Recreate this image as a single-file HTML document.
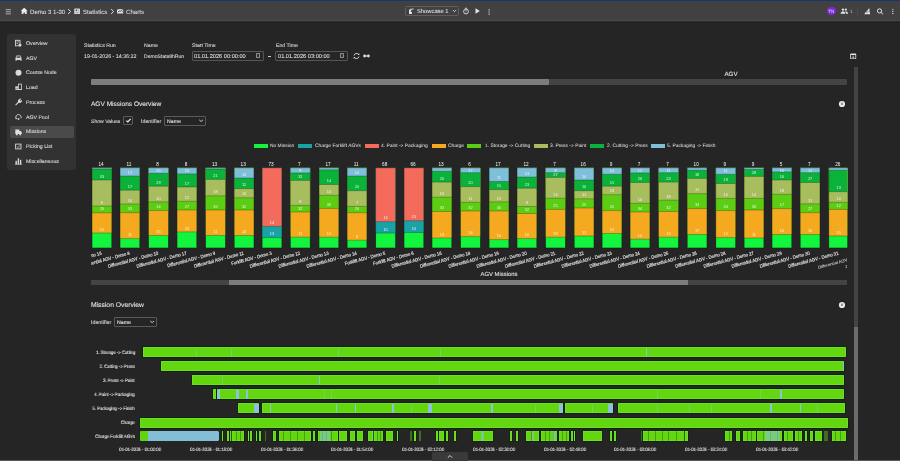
<!DOCTYPE html>
<html><head><meta charset='utf-8'><style>
html,body{margin:0;padding:0;width:900px;height:461px;overflow:hidden;background:#252525;}
body{position:relative;font-family:'Liberation Sans',sans-serif;}
.r{position:absolute;}
.t{position:absolute;white-space:nowrap;line-height:1.2;will-change:transform;text-rendering:geometricPrecision;font-family:'Liberation Sans',sans-serif;}
</style></head><body>
<div class='r' style='left:0px;top:0px;width:900.00px;height:1.00px;background:#213654;'></div><div class='r' style='left:0px;top:1px;width:900.00px;height:1.00px;background:#31425a;'></div><div class='r' style='left:0px;top:2px;width:900.00px;height:18.00px;background:#414141;'></div><div class='r' style='left:0px;top:20px;width:900.00px;height:1.00px;background:#474747;'></div><div class='r' style='left:0px;top:21px;width:900.00px;height:1.00px;background:#2d2d2d;'></div><div class='r' style='left:0px;top:22px;width:900.00px;height:1.00px;background:#1f1f1f;'></div><svg class='r' style='left:5px;top:9px' width='7' height='6' viewBox='-0.500 -0.000 7 6'><rect x='0.2' y='0.3' width='5.2' height='0.8' fill='#c8c8c8'/><rect x='0.2' y='2.4' width='5.2' height='0.8' fill='#c8c8c8'/><rect x='0.2' y='4.5' width='5.2' height='0.8' fill='#c8c8c8'/></svg><svg class='r' style='left:20px;top:7px' width='8' height='8' viewBox='-0.800 -0.800 8 8'><path d='M3.4 0 L6.8 3 L5.9 3 L5.9 6.3 L4.1 6.3 L4.1 4.6 L2.7 4.6 L2.7 6.3 L0.9 6.3 L0.9 3 L0 3 Z' fill='#ececec'/></svg><div class='t' style='left:30px;top:8.59px;font-size:6.10px;color:#d6d6d6;transform-origin:0 50%;-webkit-text-stroke:0.1px #d6d6d6;text-rendering:geometricPrecision;'>Demo 3 1-30</div><svg class='r' style='left:67px;top:8px' width='5' height='7' viewBox='-0.500 -0.500 5 7'><path d='M0.7 0.5 L3 3 L0.7 5.5' stroke='#e0e0e0' stroke-width='1' fill='none'/></svg><svg class='r' style='left:74px;top:8px' width='7' height='6' viewBox='-0.200 -0.400 7 6'><rect x='0' y='0' width='5.8' height='5.6' rx='0.6' fill='#d4d4d4'/><circle cx='2.2' cy='1.9' r='0.7' fill='#3a3a3a'/><rect x='1.6' y='3.6' width='3' height='0.6' fill='#8a8a8a'/><rect x='3.4' y='1.5' width='1.4' height='0.6' fill='#8a8a8a'/></svg><div class='t' style='left:83px;top:8.59px;font-size:6.10px;color:#d6d6d6;transform-origin:0 50%;-webkit-text-stroke:0.1px #d6d6d6;text-rendering:geometricPrecision;'>Statistics</div><svg class='r' style='left:110px;top:8px' width='5' height='7' viewBox='-0.500 -0.500 5 7'><path d='M0.7 0.5 L3 3 L0.7 5.5' stroke='#e0e0e0' stroke-width='1' fill='none'/></svg><svg class='r' style='left:117px;top:8px' width='7' height='6' viewBox='-0.000 -0.600 7 6'><path d='M0 1.2 Q3.1 -0.6 6.2 1.2 L6.2 5 L0 5 Z' fill='#dedede'/><path d='M0.8 3.6 L2.2 2.2 L3.2 3 L4.3 1.6 L5.4 3.2' stroke='#404040' stroke-width='0.8' fill='none'/></svg><div class='t' style='left:126px;top:8.59px;font-size:6.10px;color:#d6d6d6;transform-origin:0 50%;-webkit-text-stroke:0.1px #d6d6d6;text-rendering:geometricPrecision;'>Charts</div><div class='r' style='left:405.4px;top:6.4px;width:53.2px;height:9.5px;border:0.7px solid #5e5e5e;border-radius:1.5px;box-sizing:border-box'></div><svg class='r' style='left:408px;top:8px' width='6' height='6' viewBox='-0.000 -0.000 6 6'><path d='M1 6 L1 2 L3 0.5 L4 1.5 L2.5 3 L4 4.5 L4 6 Z' fill='#e0e0e0'/><circle cx='4.8' cy='1' r='0.7' fill='#e0e0e0'/></svg><div class='t' style='left:417px;top:8.87px;font-size:5.80px;color:#dcdcdc;transform-origin:0 50%;-webkit-text-stroke:0.1px #dcdcdc;'>Showcase 1</div><svg class='r' style='left:452px;top:9px' width='5' height='4' viewBox='-0.500 -0.500 5 4'><path d='M0.4 0.5 L2 2.2 L3.6 0.5' stroke='#d8d8d8' stroke-width='0.9' fill='none'/></svg><svg class='r' style='left:462px;top:7px' width='8' height='8' viewBox='-0.500 -0.500 8 8'><circle cx='3.5' cy='4' r='2.4' fill='none' stroke='#dadada' stroke-width='0.95'/><rect x='2.4' y='0.3' width='2.2' height='0.9' fill='#dadada'/><path d='M3.5 4.2 L3.5 2.6' stroke='#dadada' stroke-width='0.8'/></svg><svg class='r' style='left:475px;top:8px' width='5' height='6' viewBox='-0.000 -0.000 5 6'><path d='M0.5 0.3 L4.8 3 L0.5 5.7 Z' fill='#e4e4e4'/></svg><svg class='r' style='left:487px;top:9px' width='4' height='6' viewBox='-0.600 -0.300 4 6'><circle cx='1.5' cy='0.75' r='0.7' fill='#dadada'/><circle cx='1.5' cy='2.8' r='0.7' fill='#dadada'/><circle cx='1.5' cy='4.85' r='0.7' fill='#dadada'/></svg><div class='r' style='left:827.4px;top:6.8px;width:8.6px;height:8.6px;border-radius:50%;background:#7b2ad2'></div><div class='t' style='left:827.4px;top:8.5px;width:8.6px;text-align:center;font-size:4.6px;color:#e8dcff;-webkit-text-stroke:0'>TN</div><svg class='r' style='left:840px;top:8px' width='9' height='6' viewBox='-0.300 -0.300 9 6'><circle cx='2.7' cy='1.3' r='1.2' fill='#e2e2e2'/><circle cx='5.6' cy='1.3' r='1.1' fill='#e2e2e2'/><path d='M0.2 5.4 Q0.3 2.9 2.7 2.9 Q5.1 2.9 5.2 5.4 Z' fill='#e2e2e2'/><path d='M4.6 2.9 Q7.7 2.7 7.8 5.4 L5.8 5.4 Q5.7 3.8 4.6 2.9Z' fill='#e2e2e2'/></svg><div class='t' style='left:850.2px;top:9.87px;font-size:4.80px;color:#bdbdbd;transform-origin:0 50%;'>1</div><div class='r' style='left:856.8px;top:8px;width:0.70px;height:6.50px;background:#4b4b4b;'></div><svg class='r' style='left:864px;top:8px' width='7' height='7' viewBox='-0.000 -0.200 7 7'><path d='M0.2 6.1 L6.3 6.1 L6 5 Q5.2 3.6 5.4 1.6 L5.9 0.6 L4.9 0.2 Q3.4 2.6 1.4 4.4 Z' fill='#e4e4e4'/><path d='M2.3 4.6 Q3.8 4 4.8 3.2' stroke='#414141' stroke-width='0.55' fill='none'/></svg><svg class='r' style='left:876px;top:8px' width='8' height='7' viewBox='-0.500 -0.000 8 7'><circle cx='3' cy='2.9' r='2.1' fill='none' stroke='#e0e0e0' stroke-width='1'/><path d='M4.5 4.4 L6.6 6.4' stroke='#e0e0e0' stroke-width='1'/></svg><svg class='r' style='left:891px;top:8px' width='4' height='7' viewBox='-0.300 -0.600 4 7'><circle cx='1.5' cy='0.7' r='0.65' fill='#d8d8d8'/><circle cx='1.5' cy='2.8' r='0.65' fill='#d8d8d8'/><circle cx='1.5' cy='4.9' r='0.65' fill='#d8d8d8'/></svg><div class='r' style='left:7px;top:34px;width:69.2px;height:135.5px;background:#323232;border-radius:2px'></div><div class='r' style='left:9.5px;top:126px;width:64.30px;height:11.60px;background:#4a4a4a;border-radius:2px;'></div><svg class='r' style='left:15px;top:39px' width='7' height='8' viewBox='-0.000 -0.800 7 8'><rect x='0.5' y='0.5' width='4.5' height='5.5' fill='none' stroke='#d8d8d8' stroke-width='0.9'/><rect x='1.5' y='1.7' width='2.5' height='0.8' fill='#d8d8d8'/><rect x='1.5' y='3.3' width='1.5' height='0.8' fill='#d8d8d8'/><circle cx='5' cy='5.2' r='1.5' fill='#d8d8d8'/></svg><div class='t' style='left:25.8px;top:40.63px;font-size:5.20px;color:#dcdcdc;transform-origin:0 50%;-webkit-text-stroke:0.1px #dcdcdc;'>Overview</div><svg class='r' style='left:15px;top:54px' width='7' height='8' viewBox='-0.000 -0.800 7 8'><path d='M0.5 6 L0.5 3 L1.5 0.8 L5.5 0.8 L6.5 3 L6.5 6 L5.3 6 L5.3 5.2 L1.7 5.2 L1.7 6 Z' fill='#d8d8d8'/><rect x='1.6' y='1.6' width='3.8' height='1.3' fill='#2f2f2f'/></svg><div class='t' style='left:25.8px;top:55.63px;font-size:5.20px;color:#dcdcdc;transform-origin:0 50%;-webkit-text-stroke:0.1px #dcdcdc;'>AGV</div><svg class='r' style='left:15px;top:69px' width='7' height='8' viewBox='-0.000 -0.300 7 8'><circle cx='3.5' cy='3.5' r='3' fill='#d8d8d8'/></svg><div class='t' style='left:25.8px;top:70.13px;font-size:5.20px;color:#dcdcdc;transform-origin:0 50%;-webkit-text-stroke:0.1px #dcdcdc;'>Course Node</div><svg class='r' style='left:15px;top:83px' width='7' height='8' viewBox='-0.000 -0.800 7 8'><rect x='3.5' y='0.3' width='3' height='5.5' fill='none' stroke='#d8d8d8' stroke-width='0.8'/><rect x='0.3' y='2.5' width='2.6' height='2.4' fill='#d8d8d8'/><rect x='0.3' y='5.2' width='6.4' height='0.9' fill='#d8d8d8'/></svg><div class='t' style='left:25.8px;top:84.63px;font-size:5.20px;color:#dcdcdc;transform-origin:0 50%;-webkit-text-stroke:0.1px #dcdcdc;'>Load</div><svg class='r' style='left:15px;top:98px' width='7' height='8' viewBox='-0.000 -0.800 7 8'><path d='M0.6 6.4 L3.6 3.4 Q3 1.2 5 0.5 L4.2 1.8 L5.2 2.8 L6.5 2 Q5.9 4 3.6 3.4' stroke='#d8d8d8' stroke-width='1.1' fill='#d8d8d8'/></svg><div class='t' style='left:25.8px;top:99.63px;font-size:5.20px;color:#dcdcdc;transform-origin:0 50%;-webkit-text-stroke:0.1px #dcdcdc;'>Process</div><svg class='r' style='left:15px;top:113px' width='7' height='8' viewBox='-0.000 -0.800 7 8'><path d='M1 4.5 A2.7 2.7 0 1 1 6 4.5' stroke='#d8d8d8' stroke-width='0.9' fill='none'/><path d='M0.2 4 L1.1 5.8 L2.4 4.3Z' fill='#d8d8d8'/><circle cx='3.5' cy='5.2' r='0.9' fill='#d8d8d8'/></svg><div class='t' style='left:25.8px;top:114.63px;font-size:5.20px;color:#dcdcdc;transform-origin:0 50%;-webkit-text-stroke:0.1px #dcdcdc;'>AGV Pool</div><svg class='r' style='left:15px;top:128px' width='7' height='8' viewBox='-0.000 -0.600 7 8'><path d='M0.3 0.8 L4.3 0.8 L4.3 2.5 L5.8 2.5 L6.8 4 L6.8 5.5 L0.3 5.5 Z' fill='#e0e0e0'/><circle cx='1.8' cy='5.8' r='0.9' fill='#e0e0e0'/><circle cx='5.2' cy='5.8' r='0.9' fill='#e0e0e0'/></svg><div class='t' style='left:25.8px;top:129.43px;font-size:5.20px;color:#dcdcdc;transform-origin:0 50%;-webkit-text-stroke:0.1px #dcdcdc;'>Missions</div><svg class='r' style='left:15px;top:143px' width='7' height='8' viewBox='-0.000 -0.100 7 8'><rect x='0.6' y='1' width='5.4' height='4.8' fill='none' stroke='#d8d8d8' stroke-width='0.9'/><path d='M2 3.5 L3 4.5 L4.8 2.3' stroke='#d8d8d8' stroke-width='0.8' fill='none'/></svg><div class='t' style='left:25.8px;top:143.93px;font-size:5.20px;color:#dcdcdc;transform-origin:0 50%;-webkit-text-stroke:0.1px #dcdcdc;'>Picking List</div><svg class='r' style='left:15px;top:157px' width='7' height='8' viewBox='-0.000 -0.800 7 8'><rect x='0.5' y='3' width='1.4' height='3.5' fill='#d8d8d8'/><rect x='2.7' y='0.5' width='1.4' height='6' fill='#d8d8d8'/><rect x='4.9' y='2' width='1.4' height='4.5' fill='#d8d8d8'/><rect x='0' y='6' width='7' height='0.7' fill='#d8d8d8'/></svg><div class='t' style='left:25.8px;top:158.63px;font-size:5.20px;color:#dcdcdc;transform-origin:0 50%;-webkit-text-stroke:0.1px #dcdcdc;'>Miscellaneous</div><div class='t' style='left:84px;top:42.63px;font-size:5.20px;color:#d8d8d8;transform-origin:0 50%;-webkit-text-stroke:0.1px #d8d8d8;'>Statistics Run</div><div class='t' style='left:84px;top:53.57px;font-size:5.30px;color:#d8d8d8;transform-origin:0 50%;-webkit-text-stroke:0.1px #d8d8d8;'>19-01-2026 - 14:36:22</div><div class='t' style='left:144px;top:42.63px;font-size:5.20px;color:#d8d8d8;transform-origin:0 50%;-webkit-text-stroke:0.1px #d8d8d8;'>Name</div><div class='t' style='left:144px;top:53.69px;font-size:5.10px;color:#d8d8d8;transform-origin:0 50%;-webkit-text-stroke:0.1px #d8d8d8;'>DemoStats8hRun</div><div class='t' style='left:191.5px;top:42.63px;font-size:5.20px;color:#d8d8d8;transform-origin:0 50%;-webkit-text-stroke:0.1px #d8d8d8;'>Start Time</div><div class='t' style='left:275.5px;top:42.63px;font-size:5.20px;color:#d8d8d8;transform-origin:0 50%;-webkit-text-stroke:0.1px #d8d8d8;'>End Time</div><div class='r' style='left:191.7px;top:51px;width:72.2px;height:9.6px;border:0.6px solid #555;border-radius:1px;box-sizing:border-box;background:#262626'></div><div class='t' style='left:193.89999999999998px;top:53.76px;font-size:5.65px;color:#dedede;transform-origin:0 50%;-webkit-text-stroke:0.1px #dedede;'>01.01.2026 00:00:00</div><div class='r' style='left:255.89999999999998px;top:53.4px;width:4.6px;height:4.6px;border:0.7px solid #8a8a8a;border-radius:0.6px;box-sizing:border-box;background:#333'></div><div class='r' style='left:275.4px;top:51px;width:72.3px;height:9.6px;border:0.6px solid #555;border-radius:1px;box-sizing:border-box;background:#262626'></div><div class='t' style='left:277.59999999999997px;top:53.76px;font-size:5.65px;color:#dedede;transform-origin:0 50%;-webkit-text-stroke:0.1px #dedede;'>01.01.2026 03:00:00</div><div class='r' style='left:339.7px;top:53.4px;width:4.6px;height:4.6px;border:0.7px solid #8a8a8a;border-radius:0.6px;box-sizing:border-box;background:#333'></div><div class='r' style='left:268px;top:55.8px;width:2.50px;height:0.80px;background:#cfcfcf;'></div><svg class='r' style='left:353px;top:52px' width='7' height='8' viewBox='-0.000 -0.500 7 8'><path d='M1 3 A2.6 2.6 0 0 1 5.8 2.2' stroke='#d8d8d8' stroke-width='0.9' fill='none'/><path d='M6 4 A2.6 2.6 0 0 1 1.2 4.8' stroke='#d8d8d8' stroke-width='0.9' fill='none'/><path d='M4.5 2.4 L6.4 2.6 L6.2 0.6Z' fill='#d8d8d8'/><path d='M2.5 4.6 L0.6 4.4 L0.8 6.4Z' fill='#d8d8d8'/></svg><svg class='r' style='left:363px;top:54px' width='7' height='4' viewBox='-0.000 -0.000 7 4'><circle cx='1.6' cy='2' r='1.4' fill='#e0e0e0'/><circle cx='5.4' cy='2' r='1.4' fill='#e0e0e0'/><rect x='1.6' y='1.5' width='3.8' height='1' fill='#e0e0e0'/></svg><svg class='r' style='left:850px;top:53px' width='7' height='7' viewBox='-0.200 -0.500 7 7'><rect x='0' y='0' width='6' height='5.6' rx='0.9' fill='#e4e4e4'/><rect x='0.8' y='1.5' width='4.4' height='3.4' fill='#2a2a2a'/><path d='M3 2 L3 4.3 M2 3.4 L3 4.4 L4 3.4' stroke='#e4e4e4' stroke-width='0.7' fill='none'/></svg><div class='r' style='left:91px;top:79.4px;width:756.00px;height:5.40px;background:#444444;border-radius:1px;'></div><div class='r' style='left:91px;top:79.4px;width:458.00px;height:5.40px;background:#7d7d7d;border-radius:1px;'></div><div class='t' style='left:730.9px;top:71.23px;font-size:6.20px;color:#e4e4e4;transform:translateX(-50%) scaleX(1.0000);transform-origin:50% 50%;-webkit-text-stroke:0.1px #e4e4e4;'>AGV</div><div class='r' style='left:854px;top:67.3px;width:4.20px;height:393.70px;background:#434343;'></div><div class='r' style='left:854px;top:327px;width:4.20px;height:134.00px;background:#6c6c6c;'></div><div class='t' style='left:91px;top:100.62px;font-size:6.55px;color:#e2e2e2;transform-origin:0 50%;-webkit-text-stroke:0.1px #e2e2e2;'>AGV Missions Overview</div><svg class='r' style='left:838px;top:100px' width='8' height='8' viewBox='-0.500 -0.500 8 8'><circle cx='3.5' cy='3.5' r='3.1' fill='#e8e8e8'/><path d='M3.5 1.9 L3.5 3.4' stroke='#3a3a3a' stroke-width='0.6'/><path d='M2.4 3.2 L4.6 3.2 L3.5 4.6 Z' fill='#2a2a2a'/></svg><div class='t' style='left:91px;top:118.69px;font-size:5.10px;color:#d8d8d8;transform-origin:0 50%;-webkit-text-stroke:0.1px #d8d8d8;'>Show Values</div><div class='r' style='left:123.3px;top:115.8px;width:10px;height:9.5px;border:0.6px solid #5a5a5a;border-radius:1px;box-sizing:border-box'></div><svg class='r' style='left:125px;top:117px' width='7' height='7' viewBox='-0.500 -0.500 7 7'><path d='M0.9 3.1 L2.3 4.5 L5.1 1.3' stroke='#f4f4f4' stroke-width='1.15' fill='none'/></svg><div class='t' style='left:140.6px;top:118.57px;font-size:5.30px;color:#d8d8d8;transform-origin:0 50%;-webkit-text-stroke:0.1px #d8d8d8;'>Identifier</div><div class='r' style='left:164.2px;top:115.6px;width:41.8px;height:10.0px;border:0.6px solid #5a5a5a;border-radius:1px;box-sizing:border-box'></div><div class='t' style='left:166.5px;top:118.73px;font-size:5.20px;color:#e4e4e4;transform-origin:0 50%;-webkit-text-stroke:0.1px #e4e4e4;'>Name</div><svg class='r' style='left:198px;top:119px' width='6' height='4' viewBox='-0.700 -0.200 6 4'><path d='M0.5 0.6 L2.4 2.3 L4.3 0.6' stroke='#e8e8e8' stroke-width='0.85' fill='none'/></svg><div class='r' style='left:253.8px;top:143.8px;width:14.00px;height:4.00px;background:#12f43d;'></div><div class='t' style='left:270.4px;top:144.01px;font-size:4.90px;color:#e8e8e8;transform-origin:0 50%;'>No Mission</div><div class='r' style='left:298.2px;top:143.8px;width:14.00px;height:4.00px;background:#1aa3a6;'></div><div class='t' style='left:314.7px;top:144.01px;font-size:4.90px;color:#e8e8e8;transform-origin:0 50%;'>Charge Forklift AGVs</div><div class='r' style='left:364.9px;top:143.8px;width:14.00px;height:4.00px;background:#f46b5c;'></div><div class='t' style='left:381.3px;top:144.01px;font-size:4.90px;color:#e8e8e8;transform-origin:0 50%;'>4. Paint -&gt; Packaging</div><div class='r' style='left:431.8px;top:143.8px;width:14.00px;height:4.00px;background:#f5a91f;'></div><div class='t' style='left:448.2px;top:144.01px;font-size:4.90px;color:#e8e8e8;transform-origin:0 50%;'>Charge</div><div class='r' style='left:467.3px;top:143.8px;width:14.00px;height:4.00px;background:#5bcd12;'></div><div class='t' style='left:484.7px;top:144.01px;font-size:4.90px;color:#e8e8e8;transform-origin:0 50%;'>1. Storage -&gt; Cutting</div><div class='r' style='left:533.9px;top:143.8px;width:14.00px;height:4.00px;background:#a8bd5e;'></div><div class='t' style='left:550.2px;top:144.01px;font-size:4.90px;color:#e8e8e8;transform-origin:0 50%;'>3. Press -&gt; Paint</div><div class='r' style='left:589.9px;top:143.8px;width:14.00px;height:4.00px;background:#0bb23a;'></div><div class='t' style='left:606.8px;top:144.01px;font-size:4.90px;color:#e8e8e8;transform-origin:0 50%;'>2. Cutting -&gt; Press</div><div class='r' style='left:651.2px;top:143.8px;width:14.00px;height:4.00px;background:#7fbfd9;'></div><div class='t' style='left:667.3px;top:144.01px;font-size:4.90px;color:#e8e8e8;transform-origin:0 50%;'>5. Packaging -&gt; Finish</div><svg class='r' style='left:0;top:0' width='900' height='461' viewBox='0 0 900 461'><defs><clipPath id='cc'><rect x='91' y='150' width='756.3' height='128'/></clipPath></defs><g clip-path='url(#cc)'><rect x='92.10' y='167.90' width='19.6' height='80.00' fill='#12f43d'/><rect x='92.10' y='167.90' width='19.6' height='65.10' fill='#f5a91f'/><rect x='92.10' y='167.90' width='19.6' height='44.90' fill='#5bcd12'/><rect x='92.10' y='167.90' width='19.6' height='38.10' fill='#a8bd5e'/><rect x='92.10' y='167.90' width='19.6' height='12.10' fill='#0bb23a'/><rect x='92.10' y='167.90' width='19.6' height='1.10' fill='#7fbfd9'/><line x1='92.10' x2='111.70' y1='169.00' y2='169.00' stroke='rgba(0,0,0,0.45)' stroke-width='0.55'/><line x1='92.10' x2='111.70' y1='180.00' y2='180.00' stroke='rgba(0,0,0,0.45)' stroke-width='0.55'/><line x1='92.10' x2='111.70' y1='206.00' y2='206.00' stroke='rgba(0,0,0,0.45)' stroke-width='0.55'/><line x1='92.10' x2='111.70' y1='212.80' y2='212.80' stroke='rgba(0,0,0,0.45)' stroke-width='0.55'/><line x1='92.10' x2='111.70' y1='233.00' y2='233.00' stroke='rgba(0,0,0,0.45)' stroke-width='0.55'/><rect x='92.10' y='167.90' width='19.6' height='80.00' fill='none' stroke='rgba(0,0,0,0.45)' stroke-width='0.55'/><text x='101.90' y='177.60' font-size='3.9' fill='rgba(255,255,255,0.85)' text-anchor='middle' font-family='Liberation Sans'>33</text><text x='101.90' y='203.60' font-size='3.9' fill='rgba(255,255,255,0.85)' text-anchor='middle' font-family='Liberation Sans'>8</text><text x='101.90' y='210.40' font-size='3.9' fill='rgba(255,255,255,0.85)' text-anchor='middle' font-family='Liberation Sans'>26</text><text x='101.90' y='230.60' font-size='3.9' fill='rgba(255,255,255,0.85)' text-anchor='middle' font-family='Liberation Sans'>10</text><text x='101.00' y='165.50' font-size='4.7' fill='#f6f6f6' text-anchor='middle' font-family='Liberation Sans'>14</text><text x='0' y='0' font-size='4.85' fill='#e8e8e8' stroke='#e8e8e8' stroke-width='0.12' text-anchor='end' font-family='Liberation Sans' transform='translate(101.40 254.6) rotate(-15 0 -2.1) scale(0.887 1)'>Differential AGV - Demo 15</text><rect x='120.10' y='167.90' width='19.6' height='80.00' fill='#12f43d'/><rect x='120.10' y='167.90' width='19.6' height='70.70' fill='#f5a91f'/><rect x='120.10' y='167.90' width='19.6' height='44.80' fill='#5bcd12'/><rect x='120.10' y='167.90' width='19.6' height='36.10' fill='#a8bd5e'/><rect x='120.10' y='167.90' width='19.6' height='22.30' fill='#0bb23a'/><rect x='120.10' y='167.90' width='19.6' height='8.10' fill='#7fbfd9'/><line x1='120.10' x2='139.70' y1='176.00' y2='176.00' stroke='rgba(0,0,0,0.45)' stroke-width='0.55'/><line x1='120.10' x2='139.70' y1='190.20' y2='190.20' stroke='rgba(0,0,0,0.45)' stroke-width='0.55'/><line x1='120.10' x2='139.70' y1='204.00' y2='204.00' stroke='rgba(0,0,0,0.45)' stroke-width='0.55'/><line x1='120.10' x2='139.70' y1='212.70' y2='212.70' stroke='rgba(0,0,0,0.45)' stroke-width='0.55'/><line x1='120.10' x2='139.70' y1='238.60' y2='238.60' stroke='rgba(0,0,0,0.45)' stroke-width='0.55'/><rect x='120.10' y='167.90' width='19.6' height='80.00' fill='none' stroke='rgba(0,0,0,0.45)' stroke-width='0.55'/><text x='129.90' y='173.60' font-size='3.9' fill='rgba(255,255,255,0.85)' text-anchor='middle' font-family='Liberation Sans'>17</text><text x='129.90' y='187.80' font-size='3.9' fill='rgba(255,255,255,0.85)' text-anchor='middle' font-family='Liberation Sans'>17</text><text x='129.90' y='201.60' font-size='3.9' fill='rgba(255,255,255,0.85)' text-anchor='middle' font-family='Liberation Sans'>10</text><text x='129.90' y='210.30' font-size='3.9' fill='rgba(255,255,255,0.85)' text-anchor='middle' font-family='Liberation Sans'>33</text><text x='129.90' y='236.20' font-size='3.9' fill='rgba(255,255,255,0.85)' text-anchor='middle' font-family='Liberation Sans'>11</text><text x='129.00' y='165.50' font-size='4.7' fill='#f6f6f6' text-anchor='middle' font-family='Liberation Sans'>11</text><text x='0' y='0' font-size='4.85' fill='#e8e8e8' stroke='#e8e8e8' stroke-width='0.12' text-anchor='end' font-family='Liberation Sans' transform='translate(129.40 254.6) rotate(-15 0 -2.1) scale(0.887 1)'>Differential AGV - Demo 8</text><rect x='148.70' y='167.90' width='19.6' height='80.00' fill='#12f43d'/><rect x='148.70' y='167.90' width='19.6' height='67.60' fill='#f5a91f'/><rect x='148.70' y='167.90' width='19.6' height='42.70' fill='#5bcd12'/><rect x='148.70' y='167.90' width='19.6' height='34.00' fill='#a8bd5e'/><rect x='148.70' y='167.90' width='19.6' height='18.30' fill='#0bb23a'/><rect x='148.70' y='167.90' width='19.6' height='5.40' fill='#7fbfd9'/><line x1='148.70' x2='168.30' y1='173.30' y2='173.30' stroke='rgba(0,0,0,0.45)' stroke-width='0.55'/><line x1='148.70' x2='168.30' y1='186.20' y2='186.20' stroke='rgba(0,0,0,0.45)' stroke-width='0.55'/><line x1='148.70' x2='168.30' y1='201.90' y2='201.90' stroke='rgba(0,0,0,0.45)' stroke-width='0.55'/><line x1='148.70' x2='168.30' y1='210.60' y2='210.60' stroke='rgba(0,0,0,0.45)' stroke-width='0.55'/><line x1='148.70' x2='168.30' y1='235.50' y2='235.50' stroke='rgba(0,0,0,0.45)' stroke-width='0.55'/><rect x='148.70' y='167.90' width='19.6' height='80.00' fill='none' stroke='rgba(0,0,0,0.45)' stroke-width='0.55'/><text x='158.50' y='171.50' font-size='3.9' fill='rgba(255,255,255,0.85)' text-anchor='middle' font-family='Liberation Sans'>15</text><text x='158.50' y='183.80' font-size='3.9' fill='rgba(255,255,255,0.85)' text-anchor='middle' font-family='Liberation Sans'>29</text><text x='158.50' y='199.50' font-size='3.9' fill='rgba(255,255,255,0.85)' text-anchor='middle' font-family='Liberation Sans'>10</text><text x='158.50' y='208.20' font-size='3.9' fill='rgba(255,255,255,0.85)' text-anchor='middle' font-family='Liberation Sans'>14</text><text x='158.50' y='233.10' font-size='3.9' fill='rgba(255,255,255,0.85)' text-anchor='middle' font-family='Liberation Sans'>15</text><text x='157.60' y='165.50' font-size='4.7' fill='#f6f6f6' text-anchor='middle' font-family='Liberation Sans'>8</text><text x='0' y='0' font-size='4.85' fill='#e8e8e8' stroke='#e8e8e8' stroke-width='0.12' text-anchor='end' font-family='Liberation Sans' transform='translate(158.00 254.6) rotate(-15 0 -2.1) scale(0.887 1)'>Differential AGV - Demo 10</text><rect x='177.10' y='167.90' width='19.6' height='80.00' fill='#12f43d'/><rect x='177.10' y='167.90' width='19.6' height='64.00' fill='#f5a91f'/><rect x='177.10' y='167.90' width='19.6' height='42.10' fill='#5bcd12'/><rect x='177.10' y='167.90' width='19.6' height='33.40' fill='#a8bd5e'/><rect x='177.10' y='167.90' width='19.6' height='19.10' fill='#0bb23a'/><rect x='177.10' y='167.90' width='19.6' height='6.00' fill='#7fbfd9'/><line x1='177.10' x2='196.70' y1='173.90' y2='173.90' stroke='rgba(0,0,0,0.45)' stroke-width='0.55'/><line x1='177.10' x2='196.70' y1='187.00' y2='187.00' stroke='rgba(0,0,0,0.45)' stroke-width='0.55'/><line x1='177.10' x2='196.70' y1='201.30' y2='201.30' stroke='rgba(0,0,0,0.45)' stroke-width='0.55'/><line x1='177.10' x2='196.70' y1='210.00' y2='210.00' stroke='rgba(0,0,0,0.45)' stroke-width='0.55'/><line x1='177.10' x2='196.70' y1='231.90' y2='231.90' stroke='rgba(0,0,0,0.45)' stroke-width='0.55'/><rect x='177.10' y='167.90' width='19.6' height='80.00' fill='none' stroke='rgba(0,0,0,0.45)' stroke-width='0.55'/><text x='186.90' y='171.50' font-size='3.9' fill='rgba(255,255,255,0.85)' text-anchor='middle' font-family='Liberation Sans'>10</text><text x='186.90' y='184.60' font-size='3.9' fill='rgba(255,255,255,0.85)' text-anchor='middle' font-family='Liberation Sans'>17</text><text x='186.90' y='198.90' font-size='3.9' fill='rgba(255,255,255,0.85)' text-anchor='middle' font-family='Liberation Sans'>12</text><text x='186.90' y='207.60' font-size='3.9' fill='rgba(255,255,255,0.85)' text-anchor='middle' font-family='Liberation Sans'>27</text><text x='186.90' y='229.50' font-size='3.9' fill='rgba(255,255,255,0.85)' text-anchor='middle' font-family='Liberation Sans'>25</text><text x='186.00' y='165.50' font-size='4.7' fill='#f6f6f6' text-anchor='middle' font-family='Liberation Sans'>8</text><text x='0' y='0' font-size='4.85' fill='#e8e8e8' stroke='#e8e8e8' stroke-width='0.12' text-anchor='end' font-family='Liberation Sans' transform='translate(186.40 254.6) rotate(-15 0 -2.1) scale(0.887 1)'>Differential AGV - Demo 17</text><rect x='205.70' y='167.90' width='19.6' height='80.00' fill='#12f43d'/><rect x='205.70' y='167.90' width='19.6' height='67.60' fill='#f5a91f'/><rect x='205.70' y='167.90' width='19.6' height='42.10' fill='#5bcd12'/><rect x='205.70' y='167.90' width='19.6' height='27.90' fill='#a8bd5e'/><rect x='205.70' y='167.90' width='19.6' height='11.50' fill='#0bb23a'/><rect x='205.70' y='167.90' width='19.6' height='1.10' fill='#7fbfd9'/><line x1='205.70' x2='225.30' y1='169.00' y2='169.00' stroke='rgba(0,0,0,0.45)' stroke-width='0.55'/><line x1='205.70' x2='225.30' y1='179.40' y2='179.40' stroke='rgba(0,0,0,0.45)' stroke-width='0.55'/><line x1='205.70' x2='225.30' y1='195.80' y2='195.80' stroke='rgba(0,0,0,0.45)' stroke-width='0.55'/><line x1='205.70' x2='225.30' y1='210.00' y2='210.00' stroke='rgba(0,0,0,0.45)' stroke-width='0.55'/><line x1='205.70' x2='225.30' y1='235.50' y2='235.50' stroke='rgba(0,0,0,0.45)' stroke-width='0.55'/><rect x='205.70' y='167.90' width='19.6' height='80.00' fill='none' stroke='rgba(0,0,0,0.45)' stroke-width='0.55'/><text x='215.50' y='177.00' font-size='3.9' fill='rgba(255,255,255,0.85)' text-anchor='middle' font-family='Liberation Sans'>21</text><text x='215.50' y='193.40' font-size='3.9' fill='rgba(255,255,255,0.85)' text-anchor='middle' font-family='Liberation Sans'>18</text><text x='215.50' y='207.60' font-size='3.9' fill='rgba(255,255,255,0.85)' text-anchor='middle' font-family='Liberation Sans'>32</text><text x='215.50' y='233.10' font-size='3.9' fill='rgba(255,255,255,0.85)' text-anchor='middle' font-family='Liberation Sans'>11</text><text x='214.60' y='165.50' font-size='4.7' fill='#f6f6f6' text-anchor='middle' font-family='Liberation Sans'>13</text><text x='0' y='0' font-size='4.85' fill='#e8e8e8' stroke='#e8e8e8' stroke-width='0.12' text-anchor='end' font-family='Liberation Sans' transform='translate(215.00 254.6) rotate(-15 0 -2.1) scale(0.887 1)'>Differential AGV - Demo 9</text><rect x='234.30' y='167.90' width='19.6' height='80.00' fill='#12f43d'/><rect x='234.30' y='167.90' width='19.6' height='67.60' fill='#f5a91f'/><rect x='234.30' y='167.90' width='19.6' height='42.10' fill='#5bcd12'/><rect x='234.30' y='167.90' width='19.6' height='29.90' fill='#a8bd5e'/><rect x='234.30' y='167.90' width='19.6' height='20.70' fill='#0bb23a'/><rect x='234.30' y='167.90' width='19.6' height='10.10' fill='#7fbfd9'/><line x1='234.30' x2='253.90' y1='178.00' y2='178.00' stroke='rgba(0,0,0,0.45)' stroke-width='0.55'/><line x1='234.30' x2='253.90' y1='188.60' y2='188.60' stroke='rgba(0,0,0,0.45)' stroke-width='0.55'/><line x1='234.30' x2='253.90' y1='197.80' y2='197.80' stroke='rgba(0,0,0,0.45)' stroke-width='0.55'/><line x1='234.30' x2='253.90' y1='210.00' y2='210.00' stroke='rgba(0,0,0,0.45)' stroke-width='0.55'/><line x1='234.30' x2='253.90' y1='235.50' y2='235.50' stroke='rgba(0,0,0,0.45)' stroke-width='0.55'/><rect x='234.30' y='167.90' width='19.6' height='80.00' fill='none' stroke='rgba(0,0,0,0.45)' stroke-width='0.55'/><text x='244.10' y='175.60' font-size='3.9' fill='rgba(255,255,255,0.85)' text-anchor='middle' font-family='Liberation Sans'>13</text><text x='244.10' y='186.20' font-size='3.9' fill='rgba(255,255,255,0.85)' text-anchor='middle' font-family='Liberation Sans'>12</text><text x='244.10' y='195.40' font-size='3.9' fill='rgba(255,255,255,0.85)' text-anchor='middle' font-family='Liberation Sans'>15</text><text x='244.10' y='207.60' font-size='3.9' fill='rgba(255,255,255,0.85)' text-anchor='middle' font-family='Liberation Sans'>32</text><text x='244.10' y='233.10' font-size='3.9' fill='rgba(255,255,255,0.85)' text-anchor='middle' font-family='Liberation Sans'>14</text><text x='243.20' y='165.50' font-size='4.7' fill='#f6f6f6' text-anchor='middle' font-family='Liberation Sans'>13</text><text x='0' y='0' font-size='4.85' fill='#e8e8e8' stroke='#e8e8e8' stroke-width='0.12' text-anchor='end' font-family='Liberation Sans' transform='translate(243.60 254.6) rotate(-15 0 -2.1) scale(0.887 1)'>Differential AGV - Demo 11</text><rect x='262.20' y='167.90' width='19.6' height='80.00' fill='#12f43d'/><rect x='262.20' y='167.90' width='19.6' height='69.70' fill='#1aa3a6'/><rect x='262.20' y='167.90' width='19.6' height='58.50' fill='#f46b5c'/><line x1='262.20' x2='281.80' y1='226.40' y2='226.40' stroke='rgba(0,0,0,0.45)' stroke-width='0.55'/><line x1='262.20' x2='281.80' y1='237.60' y2='237.60' stroke='rgba(0,0,0,0.45)' stroke-width='0.55'/><rect x='262.20' y='167.90' width='19.6' height='80.00' fill='none' stroke='rgba(0,0,0,0.45)' stroke-width='0.55'/><text x='272.00' y='224.00' font-size='3.9' fill='rgba(255,255,255,0.85)' text-anchor='middle' font-family='Liberation Sans'>14</text><text x='272.00' y='235.20' font-size='3.9' fill='rgba(255,255,255,0.85)' text-anchor='middle' font-family='Liberation Sans'>13</text><text x='271.10' y='165.50' font-size='4.7' fill='#f6f6f6' text-anchor='middle' font-family='Liberation Sans'>73</text><text x='0' y='0' font-size='4.85' fill='#e8e8e8' stroke='#e8e8e8' stroke-width='0.12' text-anchor='end' font-family='Liberation Sans' transform='translate(271.50 254.6) rotate(-15 0 -2.1) scale(0.887 1)'>Forklift AGV - Demo 3</text><rect x='290.50' y='167.90' width='19.6' height='80.00' fill='#12f43d'/><rect x='290.50' y='167.90' width='19.6' height='69.30' fill='#f5a91f'/><rect x='290.50' y='167.90' width='19.6' height='44.10' fill='#5bcd12'/><rect x='290.50' y='167.90' width='19.6' height='37.40' fill='#a8bd5e'/><rect x='290.50' y='167.90' width='19.6' height='12.50' fill='#0bb23a'/><rect x='290.50' y='167.90' width='19.6' height='5.00' fill='#7fbfd9'/><line x1='290.50' x2='310.10' y1='172.90' y2='172.90' stroke='rgba(0,0,0,0.45)' stroke-width='0.55'/><line x1='290.50' x2='310.10' y1='180.40' y2='180.40' stroke='rgba(0,0,0,0.45)' stroke-width='0.55'/><line x1='290.50' x2='310.10' y1='205.30' y2='205.30' stroke='rgba(0,0,0,0.45)' stroke-width='0.55'/><line x1='290.50' x2='310.10' y1='212.00' y2='212.00' stroke='rgba(0,0,0,0.45)' stroke-width='0.55'/><line x1='290.50' x2='310.10' y1='237.20' y2='237.20' stroke='rgba(0,0,0,0.45)' stroke-width='0.55'/><rect x='290.50' y='167.90' width='19.6' height='80.00' fill='none' stroke='rgba(0,0,0,0.45)' stroke-width='0.55'/><text x='300.30' y='171.50' font-size='3.9' fill='rgba(255,255,255,0.85)' text-anchor='middle' font-family='Liberation Sans'>8</text><text x='300.30' y='178.00' font-size='3.9' fill='rgba(255,255,255,0.85)' text-anchor='middle' font-family='Liberation Sans'>31</text><text x='300.30' y='202.90' font-size='3.9' fill='rgba(255,255,255,0.85)' text-anchor='middle' font-family='Liberation Sans'>8</text><text x='300.30' y='209.60' font-size='3.9' fill='rgba(255,255,255,0.85)' text-anchor='middle' font-family='Liberation Sans'>32</text><text x='300.30' y='234.80' font-size='3.9' fill='rgba(255,255,255,0.85)' text-anchor='middle' font-family='Liberation Sans'>11</text><text x='299.40' y='165.50' font-size='4.7' fill='#f6f6f6' text-anchor='middle' font-family='Liberation Sans'>7</text><text x='0' y='0' font-size='4.85' fill='#e8e8e8' stroke='#e8e8e8' stroke-width='0.12' text-anchor='end' font-family='Liberation Sans' transform='translate(299.80 254.6) rotate(-15 0 -2.1) scale(0.887 1)'>Differential AGV - Demo 12</text><rect x='319.10' y='167.90' width='19.6' height='80.00' fill='#12f43d'/><rect x='319.10' y='167.90' width='19.6' height='69.30' fill='#f5a91f'/><rect x='319.10' y='167.90' width='19.6' height='40.50' fill='#5bcd12'/><rect x='319.10' y='167.90' width='19.6' height='27.40' fill='#a8bd5e'/><rect x='319.10' y='167.90' width='19.6' height='16.60' fill='#0bb23a'/><rect x='319.10' y='167.90' width='19.6' height='1.90' fill='#7fbfd9'/><line x1='319.10' x2='338.70' y1='169.80' y2='169.80' stroke='rgba(0,0,0,0.45)' stroke-width='0.55'/><line x1='319.10' x2='338.70' y1='184.50' y2='184.50' stroke='rgba(0,0,0,0.45)' stroke-width='0.55'/><line x1='319.10' x2='338.70' y1='195.30' y2='195.30' stroke='rgba(0,0,0,0.45)' stroke-width='0.55'/><line x1='319.10' x2='338.70' y1='208.40' y2='208.40' stroke='rgba(0,0,0,0.45)' stroke-width='0.55'/><line x1='319.10' x2='338.70' y1='237.20' y2='237.20' stroke='rgba(0,0,0,0.45)' stroke-width='0.55'/><rect x='319.10' y='167.90' width='19.6' height='80.00' fill='none' stroke='rgba(0,0,0,0.45)' stroke-width='0.55'/><text x='328.90' y='182.10' font-size='3.9' fill='rgba(255,255,255,0.85)' text-anchor='middle' font-family='Liberation Sans'>14</text><text x='328.90' y='192.90' font-size='3.9' fill='rgba(255,255,255,0.85)' text-anchor='middle' font-family='Liberation Sans'>10</text><text x='328.90' y='206.00' font-size='3.9' fill='rgba(255,255,255,0.85)' text-anchor='middle' font-family='Liberation Sans'>30</text><text x='328.90' y='234.80' font-size='3.9' fill='rgba(255,255,255,0.85)' text-anchor='middle' font-family='Liberation Sans'>12</text><text x='328.00' y='165.50' font-size='4.7' fill='#f6f6f6' text-anchor='middle' font-family='Liberation Sans'>17</text><text x='0' y='0' font-size='4.85' fill='#e8e8e8' stroke='#e8e8e8' stroke-width='0.12' text-anchor='end' font-family='Liberation Sans' transform='translate(328.40 254.6) rotate(-15 0 -2.1) scale(0.887 1)'>Differential AGV - Demo 13</text><rect x='347.20' y='167.90' width='19.6' height='80.00' fill='#12f43d'/><rect x='347.20' y='167.90' width='19.6' height='72.30' fill='#f5a91f'/><rect x='347.20' y='167.90' width='19.6' height='44.80' fill='#5bcd12'/><rect x='347.20' y='167.90' width='19.6' height='38.50' fill='#a8bd5e'/><rect x='347.20' y='167.90' width='19.6' height='22.80' fill='#0bb23a'/><rect x='347.20' y='167.90' width='19.6' height='8.10' fill='#7fbfd9'/><line x1='347.20' x2='366.80' y1='176.00' y2='176.00' stroke='rgba(0,0,0,0.45)' stroke-width='0.55'/><line x1='347.20' x2='366.80' y1='190.70' y2='190.70' stroke='rgba(0,0,0,0.45)' stroke-width='0.55'/><line x1='347.20' x2='366.80' y1='206.40' y2='206.40' stroke='rgba(0,0,0,0.45)' stroke-width='0.55'/><line x1='347.20' x2='366.80' y1='212.70' y2='212.70' stroke='rgba(0,0,0,0.45)' stroke-width='0.55'/><line x1='347.20' x2='366.80' y1='240.20' y2='240.20' stroke='rgba(0,0,0,0.45)' stroke-width='0.55'/><rect x='347.20' y='167.90' width='19.6' height='80.00' fill='none' stroke='rgba(0,0,0,0.45)' stroke-width='0.55'/><text x='357.00' y='173.60' font-size='3.9' fill='rgba(255,255,255,0.85)' text-anchor='middle' font-family='Liberation Sans'>10</text><text x='357.00' y='188.30' font-size='3.9' fill='rgba(255,255,255,0.85)' text-anchor='middle' font-family='Liberation Sans'>20</text><text x='357.00' y='204.00' font-size='3.9' fill='rgba(255,255,255,0.85)' text-anchor='middle' font-family='Liberation Sans'>7</text><text x='357.00' y='210.30' font-size='3.9' fill='rgba(255,255,255,0.85)' text-anchor='middle' font-family='Liberation Sans'>20</text><text x='357.00' y='237.80' font-size='3.9' fill='rgba(255,255,255,0.85)' text-anchor='middle' font-family='Liberation Sans'>9</text><text x='356.10' y='165.50' font-size='4.7' fill='#f6f6f6' text-anchor='middle' font-family='Liberation Sans'>11</text><text x='0' y='0' font-size='4.85' fill='#e8e8e8' stroke='#e8e8e8' stroke-width='0.12' text-anchor='end' font-family='Liberation Sans' transform='translate(356.50 254.6) rotate(-15 0 -2.1) scale(0.887 1)'>Differential AGV - Demo 14</text><rect x='375.80' y='167.90' width='19.6' height='80.00' fill='#12f43d'/><rect x='375.80' y='167.90' width='19.6' height='65.20' fill='#1aa3a6'/><rect x='375.80' y='167.90' width='19.6' height='53.80' fill='#f46b5c'/><line x1='375.80' x2='395.40' y1='221.70' y2='221.70' stroke='rgba(0,0,0,0.45)' stroke-width='0.55'/><line x1='375.80' x2='395.40' y1='233.10' y2='233.10' stroke='rgba(0,0,0,0.45)' stroke-width='0.55'/><rect x='375.80' y='167.90' width='19.6' height='80.00' fill='none' stroke='rgba(0,0,0,0.45)' stroke-width='0.55'/><text x='385.60' y='219.30' font-size='3.9' fill='rgba(255,255,255,0.85)' text-anchor='middle' font-family='Liberation Sans'>14</text><text x='385.60' y='230.70' font-size='3.9' fill='rgba(255,255,255,0.85)' text-anchor='middle' font-family='Liberation Sans'>10</text><text x='384.70' y='165.50' font-size='4.7' fill='#f6f6f6' text-anchor='middle' font-family='Liberation Sans'>68</text><text x='0' y='0' font-size='4.85' fill='#e8e8e8' stroke='#e8e8e8' stroke-width='0.12' text-anchor='end' font-family='Liberation Sans' transform='translate(385.10 254.6) rotate(-15 0 -2.1) scale(0.887 1)'>Forklift AGV - Demo 5</text><rect x='404.10' y='167.90' width='19.6' height='80.00' fill='#12f43d'/><rect x='404.10' y='167.90' width='19.6' height='64.60' fill='#1aa3a6'/><rect x='404.10' y='167.90' width='19.6' height='52.80' fill='#f46b5c'/><line x1='404.10' x2='423.70' y1='220.70' y2='220.70' stroke='rgba(0,0,0,0.45)' stroke-width='0.55'/><line x1='404.10' x2='423.70' y1='232.50' y2='232.50' stroke='rgba(0,0,0,0.45)' stroke-width='0.55'/><rect x='404.10' y='167.90' width='19.6' height='80.00' fill='none' stroke='rgba(0,0,0,0.45)' stroke-width='0.55'/><text x='413.90' y='218.30' font-size='3.9' fill='rgba(255,255,255,0.85)' text-anchor='middle' font-family='Liberation Sans'>15</text><text x='413.90' y='230.10' font-size='3.9' fill='rgba(255,255,255,0.85)' text-anchor='middle' font-family='Liberation Sans'>10</text><text x='413.00' y='165.50' font-size='4.7' fill='#f6f6f6' text-anchor='middle' font-family='Liberation Sans'>66</text><text x='0' y='0' font-size='4.85' fill='#e8e8e8' stroke='#e8e8e8' stroke-width='0.12' text-anchor='end' font-family='Liberation Sans' transform='translate(413.40 254.6) rotate(-15 0 -2.1) scale(0.887 1)'>Forklift AGV - Demo 6</text><rect x='432.10' y='167.90' width='19.6' height='80.00' fill='#12f43d'/><rect x='432.10' y='167.90' width='19.6' height='70.10' fill='#f5a91f'/><rect x='432.10' y='167.90' width='19.6' height='43.60' fill='#5bcd12'/><rect x='432.10' y='167.90' width='19.6' height='29.30' fill='#a8bd5e'/><rect x='432.10' y='167.90' width='19.6' height='14.20' fill='#0bb23a'/><rect x='432.10' y='167.90' width='19.6' height='3.40' fill='#7fbfd9'/><line x1='432.10' x2='451.70' y1='171.30' y2='171.30' stroke='rgba(0,0,0,0.45)' stroke-width='0.55'/><line x1='432.10' x2='451.70' y1='182.10' y2='182.10' stroke='rgba(0,0,0,0.45)' stroke-width='0.55'/><line x1='432.10' x2='451.70' y1='197.20' y2='197.20' stroke='rgba(0,0,0,0.45)' stroke-width='0.55'/><line x1='432.10' x2='451.70' y1='211.50' y2='211.50' stroke='rgba(0,0,0,0.45)' stroke-width='0.55'/><line x1='432.10' x2='451.70' y1='238.00' y2='238.00' stroke='rgba(0,0,0,0.45)' stroke-width='0.55'/><rect x='432.10' y='167.90' width='19.6' height='80.00' fill='none' stroke='rgba(0,0,0,0.45)' stroke-width='0.55'/><text x='441.90' y='179.70' font-size='3.9' fill='rgba(255,255,255,0.85)' text-anchor='middle' font-family='Liberation Sans'>20</text><text x='441.90' y='194.80' font-size='3.9' fill='rgba(255,255,255,0.85)' text-anchor='middle' font-family='Liberation Sans'>10</text><text x='441.90' y='209.10' font-size='3.9' fill='rgba(255,255,255,0.85)' text-anchor='middle' font-family='Liberation Sans'>33</text><text x='441.90' y='235.60' font-size='3.9' fill='rgba(255,255,255,0.85)' text-anchor='middle' font-family='Liberation Sans'>13</text><text x='441.00' y='165.50' font-size='4.7' fill='#f6f6f6' text-anchor='middle' font-family='Liberation Sans'>13</text><text x='0' y='0' font-size='4.85' fill='#e8e8e8' stroke='#e8e8e8' stroke-width='0.12' text-anchor='end' font-family='Liberation Sans' transform='translate(441.40 254.6) rotate(-15 0 -2.1) scale(0.887 1)'>Differential AGV - Demo 16</text><rect x='460.70' y='167.90' width='19.6' height='80.00' fill='#12f43d'/><rect x='460.70' y='167.90' width='19.6' height='68.70' fill='#f5a91f'/><rect x='460.70' y='167.90' width='19.6' height='43.10' fill='#5bcd12'/><rect x='460.70' y='167.90' width='19.6' height='34.40' fill='#a8bd5e'/><rect x='460.70' y='167.90' width='19.6' height='18.70' fill='#0bb23a'/><rect x='460.70' y='167.90' width='19.6' height='4.80' fill='#7fbfd9'/><line x1='460.70' x2='480.30' y1='172.70' y2='172.70' stroke='rgba(0,0,0,0.45)' stroke-width='0.55'/><line x1='460.70' x2='480.30' y1='186.60' y2='186.60' stroke='rgba(0,0,0,0.45)' stroke-width='0.55'/><line x1='460.70' x2='480.30' y1='202.30' y2='202.30' stroke='rgba(0,0,0,0.45)' stroke-width='0.55'/><line x1='460.70' x2='480.30' y1='211.00' y2='211.00' stroke='rgba(0,0,0,0.45)' stroke-width='0.55'/><line x1='460.70' x2='480.30' y1='236.60' y2='236.60' stroke='rgba(0,0,0,0.45)' stroke-width='0.55'/><rect x='460.70' y='167.90' width='19.6' height='80.00' fill='none' stroke='rgba(0,0,0,0.45)' stroke-width='0.55'/><text x='470.50' y='171.50' font-size='3.9' fill='rgba(255,255,255,0.85)' text-anchor='middle' font-family='Liberation Sans'>17</text><text x='470.50' y='184.20' font-size='3.9' fill='rgba(255,255,255,0.85)' text-anchor='middle' font-family='Liberation Sans'>20</text><text x='470.50' y='199.90' font-size='3.9' fill='rgba(255,255,255,0.85)' text-anchor='middle' font-family='Liberation Sans'>11</text><text x='470.50' y='208.60' font-size='3.9' fill='rgba(255,255,255,0.85)' text-anchor='middle' font-family='Liberation Sans'>32</text><text x='470.50' y='234.20' font-size='3.9' fill='rgba(255,255,255,0.85)' text-anchor='middle' font-family='Liberation Sans'>14</text><text x='469.60' y='165.50' font-size='4.7' fill='#f6f6f6' text-anchor='middle' font-family='Liberation Sans'>6</text><text x='0' y='0' font-size='4.85' fill='#e8e8e8' stroke='#e8e8e8' stroke-width='0.12' text-anchor='end' font-family='Liberation Sans' transform='translate(470.00 254.6) rotate(-15 0 -2.1) scale(0.887 1)'>Differential AGV - Demo 18</text><rect x='489.20' y='167.90' width='19.6' height='80.00' fill='#12f43d'/><rect x='489.20' y='167.90' width='19.6' height='71.70' fill='#f5a91f'/><rect x='489.20' y='167.90' width='19.6' height='43.10' fill='#5bcd12'/><rect x='489.20' y='167.90' width='19.6' height='34.00' fill='#a8bd5e'/><rect x='489.20' y='167.90' width='19.6' height='21.70' fill='#0bb23a'/><rect x='489.20' y='167.90' width='19.6' height='13.60' fill='#7fbfd9'/><line x1='489.20' x2='508.80' y1='181.50' y2='181.50' stroke='rgba(0,0,0,0.45)' stroke-width='0.55'/><line x1='489.20' x2='508.80' y1='189.60' y2='189.60' stroke='rgba(0,0,0,0.45)' stroke-width='0.55'/><line x1='489.20' x2='508.80' y1='201.90' y2='201.90' stroke='rgba(0,0,0,0.45)' stroke-width='0.55'/><line x1='489.20' x2='508.80' y1='211.00' y2='211.00' stroke='rgba(0,0,0,0.45)' stroke-width='0.55'/><line x1='489.20' x2='508.80' y1='239.60' y2='239.60' stroke='rgba(0,0,0,0.45)' stroke-width='0.55'/><rect x='489.20' y='167.90' width='19.6' height='80.00' fill='none' stroke='rgba(0,0,0,0.45)' stroke-width='0.55'/><text x='499.00' y='179.10' font-size='3.9' fill='rgba(255,255,255,0.85)' text-anchor='middle' font-family='Liberation Sans'>11</text><text x='499.00' y='187.20' font-size='3.9' fill='rgba(255,255,255,0.85)' text-anchor='middle' font-family='Liberation Sans'>15</text><text x='499.00' y='199.50' font-size='3.9' fill='rgba(255,255,255,0.85)' text-anchor='middle' font-family='Liberation Sans'>13</text><text x='499.00' y='208.60' font-size='3.9' fill='rgba(255,255,255,0.85)' text-anchor='middle' font-family='Liberation Sans'>30</text><text x='499.00' y='237.20' font-size='3.9' fill='rgba(255,255,255,0.85)' text-anchor='middle' font-family='Liberation Sans'>10</text><text x='498.10' y='165.50' font-size='4.7' fill='#f6f6f6' text-anchor='middle' font-family='Liberation Sans'>17</text><text x='0' y='0' font-size='4.85' fill='#e8e8e8' stroke='#e8e8e8' stroke-width='0.12' text-anchor='end' font-family='Liberation Sans' transform='translate(498.50 254.6) rotate(-15 0 -2.1) scale(0.887 1)'>Differential AGV - Demo 19</text><rect x='517.10' y='167.90' width='19.6' height='80.00' fill='#12f43d'/><rect x='517.10' y='167.90' width='19.6' height='70.70' fill='#f5a91f'/><rect x='517.10' y='167.90' width='19.6' height='45.60' fill='#5bcd12'/><rect x='517.10' y='167.90' width='19.6' height='38.50' fill='#a8bd5e'/><rect x='517.10' y='167.90' width='19.6' height='20.30' fill='#0bb23a'/><rect x='517.10' y='167.90' width='19.6' height='9.10' fill='#7fbfd9'/><line x1='517.10' x2='536.70' y1='177.00' y2='177.00' stroke='rgba(0,0,0,0.45)' stroke-width='0.55'/><line x1='517.10' x2='536.70' y1='188.20' y2='188.20' stroke='rgba(0,0,0,0.45)' stroke-width='0.55'/><line x1='517.10' x2='536.70' y1='206.40' y2='206.40' stroke='rgba(0,0,0,0.45)' stroke-width='0.55'/><line x1='517.10' x2='536.70' y1='213.50' y2='213.50' stroke='rgba(0,0,0,0.45)' stroke-width='0.55'/><line x1='517.10' x2='536.70' y1='238.60' y2='238.60' stroke='rgba(0,0,0,0.45)' stroke-width='0.55'/><rect x='517.10' y='167.90' width='19.6' height='80.00' fill='none' stroke='rgba(0,0,0,0.45)' stroke-width='0.55'/><text x='526.90' y='174.60' font-size='3.9' fill='rgba(255,255,255,0.85)' text-anchor='middle' font-family='Liberation Sans'>13</text><text x='526.90' y='185.80' font-size='3.9' fill='rgba(255,255,255,0.85)' text-anchor='middle' font-family='Liberation Sans'>23</text><text x='526.90' y='204.00' font-size='3.9' fill='rgba(255,255,255,0.85)' text-anchor='middle' font-family='Liberation Sans'>9</text><text x='526.90' y='211.10' font-size='3.9' fill='rgba(255,255,255,0.85)' text-anchor='middle' font-family='Liberation Sans'>32</text><text x='526.90' y='236.20' font-size='3.9' fill='rgba(255,255,255,0.85)' text-anchor='middle' font-family='Liberation Sans'>10</text><text x='526.00' y='165.50' font-size='4.7' fill='#f6f6f6' text-anchor='middle' font-family='Liberation Sans'>12</text><text x='0' y='0' font-size='4.85' fill='#e8e8e8' stroke='#e8e8e8' stroke-width='0.12' text-anchor='end' font-family='Liberation Sans' transform='translate(526.40 254.6) rotate(-15 0 -2.1) scale(0.887 1)'>Differential AGV - Demo 20</text><rect x='545.70' y='167.90' width='19.6' height='80.00' fill='#12f43d'/><rect x='545.70' y='167.90' width='19.6' height='69.30' fill='#f5a91f'/><rect x='545.70' y='167.90' width='19.6' height='41.50' fill='#5bcd12'/><rect x='545.70' y='167.90' width='19.6' height='30.30' fill='#a8bd5e'/><rect x='545.70' y='167.90' width='19.6' height='9.50' fill='#0bb23a'/><rect x='545.70' y='167.90' width='19.6' height='4.80' fill='#7fbfd9'/><line x1='545.70' x2='565.30' y1='172.70' y2='172.70' stroke='rgba(0,0,0,0.45)' stroke-width='0.55'/><line x1='545.70' x2='565.30' y1='177.40' y2='177.40' stroke='rgba(0,0,0,0.45)' stroke-width='0.55'/><line x1='545.70' x2='565.30' y1='198.20' y2='198.20' stroke='rgba(0,0,0,0.45)' stroke-width='0.55'/><line x1='545.70' x2='565.30' y1='209.40' y2='209.40' stroke='rgba(0,0,0,0.45)' stroke-width='0.55'/><line x1='545.70' x2='565.30' y1='237.20' y2='237.20' stroke='rgba(0,0,0,0.45)' stroke-width='0.55'/><rect x='545.70' y='167.90' width='19.6' height='80.00' fill='none' stroke='rgba(0,0,0,0.45)' stroke-width='0.55'/><text x='555.50' y='171.50' font-size='3.9' fill='rgba(255,255,255,0.85)' text-anchor='middle' font-family='Liberation Sans'>8</text><text x='555.50' y='176.30' font-size='3.9' fill='rgba(255,255,255,0.85)' text-anchor='middle' font-family='Liberation Sans'>27</text><text x='555.50' y='195.80' font-size='3.9' fill='rgba(255,255,255,0.85)' text-anchor='middle' font-family='Liberation Sans'>14</text><text x='555.50' y='207.00' font-size='3.9' fill='rgba(255,255,255,0.85)' text-anchor='middle' font-family='Liberation Sans'>25</text><text x='555.50' y='234.80' font-size='3.9' fill='rgba(255,255,255,0.85)' text-anchor='middle' font-family='Liberation Sans'>33</text><text x='554.60' y='165.50' font-size='4.7' fill='#f6f6f6' text-anchor='middle' font-family='Liberation Sans'>7</text><text x='0' y='0' font-size='4.85' fill='#e8e8e8' stroke='#e8e8e8' stroke-width='0.12' text-anchor='end' font-family='Liberation Sans' transform='translate(555.00 254.6) rotate(-15 0 -2.1) scale(0.887 1)'>Differential AGV - Demo 21</text><rect x='574.30' y='167.90' width='19.6' height='80.00' fill='#12f43d'/><rect x='574.30' y='167.90' width='19.6' height='68.10' fill='#f5a91f'/><rect x='574.30' y='167.90' width='19.6' height='40.10' fill='#5bcd12'/><rect x='574.30' y='167.90' width='19.6' height='30.90' fill='#a8bd5e'/><rect x='574.30' y='167.90' width='19.6' height='22.80' fill='#0bb23a'/><rect x='574.30' y='167.90' width='19.6' height='12.10' fill='#7fbfd9'/><line x1='574.30' x2='593.90' y1='180.00' y2='180.00' stroke='rgba(0,0,0,0.45)' stroke-width='0.55'/><line x1='574.30' x2='593.90' y1='190.70' y2='190.70' stroke='rgba(0,0,0,0.45)' stroke-width='0.55'/><line x1='574.30' x2='593.90' y1='198.80' y2='198.80' stroke='rgba(0,0,0,0.45)' stroke-width='0.55'/><line x1='574.30' x2='593.90' y1='208.00' y2='208.00' stroke='rgba(0,0,0,0.45)' stroke-width='0.55'/><line x1='574.30' x2='593.90' y1='236.00' y2='236.00' stroke='rgba(0,0,0,0.45)' stroke-width='0.55'/><rect x='574.30' y='167.90' width='19.6' height='80.00' fill='none' stroke='rgba(0,0,0,0.45)' stroke-width='0.55'/><text x='584.10' y='177.60' font-size='3.9' fill='rgba(255,255,255,0.85)' text-anchor='middle' font-family='Liberation Sans'>14</text><text x='584.10' y='188.30' font-size='3.9' fill='rgba(255,255,255,0.85)' text-anchor='middle' font-family='Liberation Sans'>10</text><text x='584.10' y='196.40' font-size='3.9' fill='rgba(255,255,255,0.85)' text-anchor='middle' font-family='Liberation Sans'>11</text><text x='584.10' y='205.60' font-size='3.9' fill='rgba(255,255,255,0.85)' text-anchor='middle' font-family='Liberation Sans'>25</text><text x='584.10' y='233.60' font-size='3.9' fill='rgba(255,255,255,0.85)' text-anchor='middle' font-family='Liberation Sans'>11</text><text x='583.20' y='165.50' font-size='4.7' fill='#f6f6f6' text-anchor='middle' font-family='Liberation Sans'>16</text><text x='0' y='0' font-size='4.85' fill='#e8e8e8' stroke='#e8e8e8' stroke-width='0.12' text-anchor='end' font-family='Liberation Sans' transform='translate(583.60 254.6) rotate(-15 0 -2.1) scale(0.887 1)'>Differential AGV - Demo 22</text><rect x='602.20' y='167.90' width='19.6' height='80.00' fill='#12f43d'/><rect x='602.20' y='167.90' width='19.6' height='65.60' fill='#f5a91f'/><rect x='602.20' y='167.90' width='19.6' height='42.70' fill='#5bcd12'/><rect x='602.20' y='167.90' width='19.6' height='26.80' fill='#a8bd5e'/><rect x='602.20' y='167.90' width='19.6' height='18.30' fill='#0bb23a'/><rect x='602.20' y='167.90' width='19.6' height='6.40' fill='#7fbfd9'/><line x1='602.20' x2='621.80' y1='174.30' y2='174.30' stroke='rgba(0,0,0,0.45)' stroke-width='0.55'/><line x1='602.20' x2='621.80' y1='186.20' y2='186.20' stroke='rgba(0,0,0,0.45)' stroke-width='0.55'/><line x1='602.20' x2='621.80' y1='194.70' y2='194.70' stroke='rgba(0,0,0,0.45)' stroke-width='0.55'/><line x1='602.20' x2='621.80' y1='210.60' y2='210.60' stroke='rgba(0,0,0,0.45)' stroke-width='0.55'/><line x1='602.20' x2='621.80' y1='233.50' y2='233.50' stroke='rgba(0,0,0,0.45)' stroke-width='0.55'/><rect x='602.20' y='167.90' width='19.6' height='80.00' fill='none' stroke='rgba(0,0,0,0.45)' stroke-width='0.55'/><text x='612.00' y='171.90' font-size='3.9' fill='rgba(255,255,255,0.85)' text-anchor='middle' font-family='Liberation Sans'>14</text><text x='612.00' y='183.80' font-size='3.9' fill='rgba(255,255,255,0.85)' text-anchor='middle' font-family='Liberation Sans'>15</text><text x='612.00' y='192.30' font-size='3.9' fill='rgba(255,255,255,0.85)' text-anchor='middle' font-family='Liberation Sans'>19</text><text x='612.00' y='208.20' font-size='3.9' fill='rgba(255,255,255,0.85)' text-anchor='middle' font-family='Liberation Sans'>20</text><text x='612.00' y='231.10' font-size='3.9' fill='rgba(255,255,255,0.85)' text-anchor='middle' font-family='Liberation Sans'>10</text><text x='611.10' y='165.50' font-size='4.7' fill='#f6f6f6' text-anchor='middle' font-family='Liberation Sans'>9</text><text x='0' y='0' font-size='4.85' fill='#e8e8e8' stroke='#e8e8e8' stroke-width='0.12' text-anchor='end' font-family='Liberation Sans' transform='translate(611.50 254.6) rotate(-15 0 -2.1) scale(0.887 1)'>Differential AGV - Demo 23</text><rect x='630.20' y='167.90' width='19.6' height='80.00' fill='#12f43d'/><rect x='630.20' y='167.90' width='19.6' height='71.30' fill='#f5a91f'/><rect x='630.20' y='167.90' width='19.6' height='44.10' fill='#5bcd12'/><rect x='630.20' y='167.90' width='19.6' height='35.40' fill='#a8bd5e'/><rect x='630.20' y='167.90' width='19.6' height='14.60' fill='#0bb23a'/><rect x='630.20' y='167.90' width='19.6' height='5.00' fill='#7fbfd9'/><line x1='630.20' x2='649.80' y1='172.90' y2='172.90' stroke='rgba(0,0,0,0.45)' stroke-width='0.55'/><line x1='630.20' x2='649.80' y1='182.50' y2='182.50' stroke='rgba(0,0,0,0.45)' stroke-width='0.55'/><line x1='630.20' x2='649.80' y1='203.30' y2='203.30' stroke='rgba(0,0,0,0.45)' stroke-width='0.55'/><line x1='630.20' x2='649.80' y1='212.00' y2='212.00' stroke='rgba(0,0,0,0.45)' stroke-width='0.55'/><line x1='630.20' x2='649.80' y1='239.20' y2='239.20' stroke='rgba(0,0,0,0.45)' stroke-width='0.55'/><rect x='630.20' y='167.90' width='19.6' height='80.00' fill='none' stroke='rgba(0,0,0,0.45)' stroke-width='0.55'/><text x='640.00' y='171.50' font-size='3.9' fill='rgba(255,255,255,0.85)' text-anchor='middle' font-family='Liberation Sans'>12</text><text x='640.00' y='180.10' font-size='3.9' fill='rgba(255,255,255,0.85)' text-anchor='middle' font-family='Liberation Sans'>26</text><text x='640.00' y='200.90' font-size='3.9' fill='rgba(255,255,255,0.85)' text-anchor='middle' font-family='Liberation Sans'>10</text><text x='640.00' y='209.60' font-size='3.9' fill='rgba(255,255,255,0.85)' text-anchor='middle' font-family='Liberation Sans'>34</text><text x='640.00' y='236.80' font-size='3.9' fill='rgba(255,255,255,0.85)' text-anchor='middle' font-family='Liberation Sans'>10</text><text x='639.10' y='165.50' font-size='4.7' fill='#f6f6f6' text-anchor='middle' font-family='Liberation Sans'>7</text><text x='0' y='0' font-size='4.85' fill='#e8e8e8' stroke='#e8e8e8' stroke-width='0.12' text-anchor='end' font-family='Liberation Sans' transform='translate(639.50 254.6) rotate(-15 0 -2.1) scale(0.887 1)'>Differential AGV - Demo 24</text><rect x='658.70' y='167.90' width='19.6' height='80.00' fill='#12f43d'/><rect x='658.70' y='167.90' width='19.6' height='69.30' fill='#f5a91f'/><rect x='658.70' y='167.90' width='19.6' height='43.60' fill='#5bcd12'/><rect x='658.70' y='167.90' width='19.6' height='32.30' fill='#a8bd5e'/><rect x='658.70' y='167.90' width='19.6' height='14.20' fill='#0bb23a'/><rect x='658.70' y='167.90' width='19.6' height='4.80' fill='#7fbfd9'/><line x1='658.70' x2='678.30' y1='172.70' y2='172.70' stroke='rgba(0,0,0,0.45)' stroke-width='0.55'/><line x1='658.70' x2='678.30' y1='182.10' y2='182.10' stroke='rgba(0,0,0,0.45)' stroke-width='0.55'/><line x1='658.70' x2='678.30' y1='200.20' y2='200.20' stroke='rgba(0,0,0,0.45)' stroke-width='0.55'/><line x1='658.70' x2='678.30' y1='211.50' y2='211.50' stroke='rgba(0,0,0,0.45)' stroke-width='0.55'/><line x1='658.70' x2='678.30' y1='237.20' y2='237.20' stroke='rgba(0,0,0,0.45)' stroke-width='0.55'/><rect x='658.70' y='167.90' width='19.6' height='80.00' fill='none' stroke='rgba(0,0,0,0.45)' stroke-width='0.55'/><text x='668.50' y='171.50' font-size='3.9' fill='rgba(255,255,255,0.85)' text-anchor='middle' font-family='Liberation Sans'>11</text><text x='668.50' y='179.70' font-size='3.9' fill='rgba(255,255,255,0.85)' text-anchor='middle' font-family='Liberation Sans'>23</text><text x='668.50' y='197.80' font-size='3.9' fill='rgba(255,255,255,0.85)' text-anchor='middle' font-family='Liberation Sans'>18</text><text x='668.50' y='209.10' font-size='3.9' fill='rgba(255,255,255,0.85)' text-anchor='middle' font-family='Liberation Sans'>32</text><text x='668.50' y='234.80' font-size='3.9' fill='rgba(255,255,255,0.85)' text-anchor='middle' font-family='Liberation Sans'>13</text><text x='667.60' y='165.50' font-size='4.7' fill='#f6f6f6' text-anchor='middle' font-family='Liberation Sans'>7</text><text x='0' y='0' font-size='4.85' fill='#e8e8e8' stroke='#e8e8e8' stroke-width='0.12' text-anchor='end' font-family='Liberation Sans' transform='translate(668.00 254.6) rotate(-15 0 -2.1) scale(0.887 1)'>Differential AGV - Demo 25</text><rect x='687.30' y='167.90' width='19.6' height='80.00' fill='#12f43d'/><rect x='687.30' y='167.90' width='19.6' height='66.60' fill='#f5a91f'/><rect x='687.30' y='167.90' width='19.6' height='40.70' fill='#5bcd12'/><rect x='687.30' y='167.90' width='19.6' height='25.80' fill='#a8bd5e'/><rect x='687.30' y='167.90' width='19.6' height='10.50' fill='#0bb23a'/><rect x='687.30' y='167.90' width='19.6' height='2.30' fill='#7fbfd9'/><line x1='687.30' x2='706.90' y1='170.20' y2='170.20' stroke='rgba(0,0,0,0.45)' stroke-width='0.55'/><line x1='687.30' x2='706.90' y1='178.40' y2='178.40' stroke='rgba(0,0,0,0.45)' stroke-width='0.55'/><line x1='687.30' x2='706.90' y1='193.70' y2='193.70' stroke='rgba(0,0,0,0.45)' stroke-width='0.55'/><line x1='687.30' x2='706.90' y1='208.60' y2='208.60' stroke='rgba(0,0,0,0.45)' stroke-width='0.55'/><line x1='687.30' x2='706.90' y1='234.50' y2='234.50' stroke='rgba(0,0,0,0.45)' stroke-width='0.55'/><rect x='687.30' y='167.90' width='19.6' height='80.00' fill='none' stroke='rgba(0,0,0,0.45)' stroke-width='0.55'/><text x='697.10' y='176.00' font-size='3.9' fill='rgba(255,255,255,0.85)' text-anchor='middle' font-family='Liberation Sans'>18</text><text x='697.10' y='191.30' font-size='3.9' fill='rgba(255,255,255,0.85)' text-anchor='middle' font-family='Liberation Sans'>11</text><text x='697.10' y='206.20' font-size='3.9' fill='rgba(255,255,255,0.85)' text-anchor='middle' font-family='Liberation Sans'>33</text><text x='697.10' y='232.10' font-size='3.9' fill='rgba(255,255,255,0.85)' text-anchor='middle' font-family='Liberation Sans'>17</text><text x='696.20' y='165.50' font-size='4.7' fill='#f6f6f6' text-anchor='middle' font-family='Liberation Sans'>10</text><text x='0' y='0' font-size='4.85' fill='#e8e8e8' stroke='#e8e8e8' stroke-width='0.12' text-anchor='end' font-family='Liberation Sans' transform='translate(696.60 254.6) rotate(-15 0 -2.1) scale(0.887 1)'>Differential AGV - Demo 26</text><rect x='715.90' y='167.90' width='19.6' height='80.00' fill='#12f43d'/><rect x='715.90' y='167.90' width='19.6' height='69.70' fill='#f5a91f'/><rect x='715.90' y='167.90' width='19.6' height='42.70' fill='#5bcd12'/><rect x='715.90' y='167.90' width='19.6' height='30.50' fill='#a8bd5e'/><rect x='715.90' y='167.90' width='19.6' height='15.60' fill='#0bb23a'/><rect x='715.90' y='167.90' width='19.6' height='6.40' fill='#7fbfd9'/><line x1='715.90' x2='735.50' y1='174.30' y2='174.30' stroke='rgba(0,0,0,0.45)' stroke-width='0.55'/><line x1='715.90' x2='735.50' y1='183.50' y2='183.50' stroke='rgba(0,0,0,0.45)' stroke-width='0.55'/><line x1='715.90' x2='735.50' y1='198.40' y2='198.40' stroke='rgba(0,0,0,0.45)' stroke-width='0.55'/><line x1='715.90' x2='735.50' y1='210.60' y2='210.60' stroke='rgba(0,0,0,0.45)' stroke-width='0.55'/><line x1='715.90' x2='735.50' y1='237.60' y2='237.60' stroke='rgba(0,0,0,0.45)' stroke-width='0.55'/><rect x='715.90' y='167.90' width='19.6' height='80.00' fill='none' stroke='rgba(0,0,0,0.45)' stroke-width='0.55'/><text x='725.70' y='171.90' font-size='3.9' fill='rgba(255,255,255,0.85)' text-anchor='middle' font-family='Liberation Sans'>11</text><text x='725.70' y='181.10' font-size='3.9' fill='rgba(255,255,255,0.85)' text-anchor='middle' font-family='Liberation Sans'>19</text><text x='725.70' y='196.00' font-size='3.9' fill='rgba(255,255,255,0.85)' text-anchor='middle' font-family='Liberation Sans'>15</text><text x='725.70' y='208.20' font-size='3.9' fill='rgba(255,255,255,0.85)' text-anchor='middle' font-family='Liberation Sans'>34</text><text x='725.70' y='235.20' font-size='3.9' fill='rgba(255,255,255,0.85)' text-anchor='middle' font-family='Liberation Sans'>12</text><text x='724.80' y='165.50' font-size='4.7' fill='#f6f6f6' text-anchor='middle' font-family='Liberation Sans'>9</text><text x='0' y='0' font-size='4.85' fill='#e8e8e8' stroke='#e8e8e8' stroke-width='0.12' text-anchor='end' font-family='Liberation Sans' transform='translate(725.20 254.6) rotate(-15 0 -2.1) scale(0.887 1)'>Differential AGV - Demo 28</text><rect x='744.20' y='167.90' width='19.6' height='80.00' fill='#12f43d'/><rect x='744.20' y='167.90' width='19.6' height='70.10' fill='#f5a91f'/><rect x='744.20' y='167.90' width='19.6' height='42.10' fill='#5bcd12'/><rect x='744.20' y='167.90' width='19.6' height='30.50' fill='#a8bd5e'/><rect x='744.20' y='167.90' width='19.6' height='8.50' fill='#0bb23a'/><rect x='744.20' y='167.90' width='19.6' height='1.60' fill='#7fbfd9'/><line x1='744.20' x2='763.80' y1='169.50' y2='169.50' stroke='rgba(0,0,0,0.45)' stroke-width='0.55'/><line x1='744.20' x2='763.80' y1='176.40' y2='176.40' stroke='rgba(0,0,0,0.45)' stroke-width='0.55'/><line x1='744.20' x2='763.80' y1='198.40' y2='198.40' stroke='rgba(0,0,0,0.45)' stroke-width='0.55'/><line x1='744.20' x2='763.80' y1='210.00' y2='210.00' stroke='rgba(0,0,0,0.45)' stroke-width='0.55'/><line x1='744.20' x2='763.80' y1='238.00' y2='238.00' stroke='rgba(0,0,0,0.45)' stroke-width='0.55'/><rect x='744.20' y='167.90' width='19.6' height='80.00' fill='none' stroke='rgba(0,0,0,0.45)' stroke-width='0.55'/><text x='754.00' y='174.00' font-size='3.9' fill='rgba(255,255,255,0.85)' text-anchor='middle' font-family='Liberation Sans'>28</text><text x='754.00' y='196.00' font-size='3.9' fill='rgba(255,255,255,0.85)' text-anchor='middle' font-family='Liberation Sans'>14</text><text x='754.00' y='207.60' font-size='3.9' fill='rgba(255,255,255,0.85)' text-anchor='middle' font-family='Liberation Sans'>36</text><text x='754.00' y='235.60' font-size='3.9' fill='rgba(255,255,255,0.85)' text-anchor='middle' font-family='Liberation Sans'>11</text><text x='753.10' y='165.50' font-size='4.7' fill='#f6f6f6' text-anchor='middle' font-family='Liberation Sans'>9</text><text x='0' y='0' font-size='4.85' fill='#e8e8e8' stroke='#e8e8e8' stroke-width='0.12' text-anchor='end' font-family='Liberation Sans' transform='translate(753.50 254.6) rotate(-15 0 -2.1) scale(0.887 1)'>Differential AGV - Demo 27</text><rect x='772.10' y='167.90' width='19.6' height='80.00' fill='#12f43d'/><rect x='772.10' y='167.90' width='19.6' height='66.60' fill='#f5a91f'/><rect x='772.10' y='167.90' width='19.6' height='40.70' fill='#5bcd12'/><rect x='772.10' y='167.90' width='19.6' height='26.40' fill='#a8bd5e'/><rect x='772.10' y='167.90' width='19.6' height='12.10' fill='#0bb23a'/><rect x='772.10' y='167.90' width='19.6' height='4.00' fill='#7fbfd9'/><line x1='772.10' x2='791.70' y1='171.90' y2='171.90' stroke='rgba(0,0,0,0.45)' stroke-width='0.55'/><line x1='772.10' x2='791.70' y1='180.00' y2='180.00' stroke='rgba(0,0,0,0.45)' stroke-width='0.55'/><line x1='772.10' x2='791.70' y1='194.30' y2='194.30' stroke='rgba(0,0,0,0.45)' stroke-width='0.55'/><line x1='772.10' x2='791.70' y1='208.60' y2='208.60' stroke='rgba(0,0,0,0.45)' stroke-width='0.55'/><line x1='772.10' x2='791.70' y1='234.50' y2='234.50' stroke='rgba(0,0,0,0.45)' stroke-width='0.55'/><rect x='772.10' y='167.90' width='19.6' height='80.00' fill='none' stroke='rgba(0,0,0,0.45)' stroke-width='0.55'/><text x='781.90' y='171.50' font-size='3.9' fill='rgba(255,255,255,0.85)' text-anchor='middle' font-family='Liberation Sans'>10</text><text x='781.90' y='177.60' font-size='3.9' fill='rgba(255,255,255,0.85)' text-anchor='middle' font-family='Liberation Sans'>16</text><text x='781.90' y='191.90' font-size='3.9' fill='rgba(255,255,255,0.85)' text-anchor='middle' font-family='Liberation Sans'>18</text><text x='781.90' y='206.20' font-size='3.9' fill='rgba(255,255,255,0.85)' text-anchor='middle' font-family='Liberation Sans'>17</text><text x='781.90' y='232.10' font-size='3.9' fill='rgba(255,255,255,0.85)' text-anchor='middle' font-family='Liberation Sans'>10</text><text x='781.00' y='165.50' font-size='4.7' fill='#f6f6f6' text-anchor='middle' font-family='Liberation Sans'>5</text><text x='0' y='0' font-size='4.85' fill='#e8e8e8' stroke='#e8e8e8' stroke-width='0.12' text-anchor='end' font-family='Liberation Sans' transform='translate(781.40 254.6) rotate(-15 0 -2.1) scale(0.887 1)'>Differential AGV - Demo 29</text><rect x='800.30' y='167.90' width='19.6' height='80.00' fill='#12f43d'/><rect x='800.30' y='167.90' width='19.6' height='66.60' fill='#f5a91f'/><rect x='800.30' y='167.90' width='19.6' height='44.80' fill='#5bcd12'/><rect x='800.30' y='167.90' width='19.6' height='36.00' fill='#a8bd5e'/><rect x='800.30' y='167.90' width='19.6' height='14.60' fill='#0bb23a'/><rect x='800.30' y='167.90' width='19.6' height='4.80' fill='#7fbfd9'/><line x1='800.30' x2='819.90' y1='172.70' y2='172.70' stroke='rgba(0,0,0,0.45)' stroke-width='0.55'/><line x1='800.30' x2='819.90' y1='182.50' y2='182.50' stroke='rgba(0,0,0,0.45)' stroke-width='0.55'/><line x1='800.30' x2='819.90' y1='203.90' y2='203.90' stroke='rgba(0,0,0,0.45)' stroke-width='0.55'/><line x1='800.30' x2='819.90' y1='212.70' y2='212.70' stroke='rgba(0,0,0,0.45)' stroke-width='0.55'/><line x1='800.30' x2='819.90' y1='234.50' y2='234.50' stroke='rgba(0,0,0,0.45)' stroke-width='0.55'/><rect x='800.30' y='167.90' width='19.6' height='80.00' fill='none' stroke='rgba(0,0,0,0.45)' stroke-width='0.55'/><text x='810.10' y='171.50' font-size='3.9' fill='rgba(255,255,255,0.85)' text-anchor='middle' font-family='Liberation Sans'>11</text><text x='810.10' y='180.10' font-size='3.9' fill='rgba(255,255,255,0.85)' text-anchor='middle' font-family='Liberation Sans'>27</text><text x='810.10' y='201.50' font-size='3.9' fill='rgba(255,255,255,0.85)' text-anchor='middle' font-family='Liberation Sans'>11</text><text x='810.10' y='210.30' font-size='3.9' fill='rgba(255,255,255,0.85)' text-anchor='middle' font-family='Liberation Sans'>27</text><text x='810.10' y='232.10' font-size='3.9' fill='rgba(255,255,255,0.85)' text-anchor='middle' font-family='Liberation Sans'>10</text><text x='809.20' y='165.50' font-size='4.7' fill='#f6f6f6' text-anchor='middle' font-family='Liberation Sans'>7</text><text x='0' y='0' font-size='4.85' fill='#e8e8e8' stroke='#e8e8e8' stroke-width='0.12' text-anchor='end' font-family='Liberation Sans' transform='translate(809.60 254.6) rotate(-15 0 -2.1) scale(0.887 1)'>Differential AGV - Demo 30</text><rect x='828.90' y='167.90' width='19.6' height='80.00' fill='#12f43d'/><rect x='828.90' y='167.90' width='19.6' height='68.10' fill='#f5a91f'/><rect x='828.90' y='167.90' width='19.6' height='41.50' fill='#5bcd12'/><rect x='828.90' y='167.90' width='19.6' height='34.40' fill='#a8bd5e'/><rect x='828.90' y='167.90' width='19.6' height='23.80' fill='#0bb23a'/><rect x='828.90' y='167.90' width='19.6' height='2.30' fill='#7fbfd9'/><line x1='828.90' x2='848.50' y1='170.20' y2='170.20' stroke='rgba(0,0,0,0.45)' stroke-width='0.55'/><line x1='828.90' x2='848.50' y1='191.70' y2='191.70' stroke='rgba(0,0,0,0.45)' stroke-width='0.55'/><line x1='828.90' x2='848.50' y1='202.30' y2='202.30' stroke='rgba(0,0,0,0.45)' stroke-width='0.55'/><line x1='828.90' x2='848.50' y1='209.40' y2='209.40' stroke='rgba(0,0,0,0.45)' stroke-width='0.55'/><line x1='828.90' x2='848.50' y1='236.00' y2='236.00' stroke='rgba(0,0,0,0.45)' stroke-width='0.55'/><rect x='828.90' y='167.90' width='19.6' height='80.00' fill='none' stroke='rgba(0,0,0,0.45)' stroke-width='0.55'/><text x='838.70' y='189.30' font-size='3.9' fill='rgba(255,255,255,0.85)' text-anchor='middle' font-family='Liberation Sans'>13</text><text x='838.70' y='199.90' font-size='3.9' fill='rgba(255,255,255,0.85)' text-anchor='middle' font-family='Liberation Sans'>10</text><text x='838.70' y='207.00' font-size='3.9' fill='rgba(255,255,255,0.85)' text-anchor='middle' font-family='Liberation Sans'>12</text><text x='838.70' y='233.60' font-size='3.9' fill='rgba(255,255,255,0.85)' text-anchor='middle' font-family='Liberation Sans'>15</text><text x='837.80' y='165.50' font-size='4.7' fill='#f6f6f6' text-anchor='middle' font-family='Liberation Sans'>26</text><text x='0' y='0' font-size='4.85' fill='#e8e8e8' stroke='#e8e8e8' stroke-width='0.12' text-anchor='end' font-family='Liberation Sans' transform='translate(838.20 254.6) rotate(-15 0 -2.1) scale(0.887 1)'>Differential AGV - Demo 31</text><text x='847.3' y='261.2' font-size='4.3' fill='#e2e2e2' text-anchor='end' font-family='Liberation Sans' transform='rotate(-15 847.3 259)'>Differential AGV</text><text x='847.3' y='268.3' font-size='4.3' fill='#e2e2e2' text-anchor='end' font-family='Liberation Sans'>1</text></g></svg><div class='t' style='left:498.5px;top:272.41px;font-size:5.90px;color:#e0e0e0;transform:translateX(-50%) scaleX(1.0000);transform-origin:50% 50%;-webkit-text-stroke:0.1px #e0e0e0;'>AGV Missions</div><div class='r' style='left:91px;top:280.3px;width:756.20px;height:5.20px;background:#444444;'></div><div class='r' style='left:229.4px;top:280.3px;width:458.60px;height:5.20px;background:#7d7d7d;'></div><div class='t' style='left:91px;top:301.50px;font-size:6.75px;color:#e2e2e2;transform-origin:0 50%;-webkit-text-stroke:0.1px #e2e2e2;'>Mission Overview</div><svg class='r' style='left:838px;top:301px' width='8' height='8' viewBox='-0.500 -0.500 8 8'><circle cx='3.5' cy='3.5' r='3.1' fill='#e8e8e8'/><path d='M3.5 1.9 L3.5 3.4' stroke='#3a3a3a' stroke-width='0.6'/><path d='M2.4 3.2 L4.6 3.2 L3.5 4.6 Z' fill='#2a2a2a'/></svg><div class='t' style='left:91.2px;top:319.57px;font-size:5.30px;color:#d8d8d8;transform-origin:0 50%;-webkit-text-stroke:0.1px #d8d8d8;'>Identifier</div><div class='r' style='left:114.3px;top:316.6px;width:42.7px;height:10.3px;border:0.6px solid #5a5a5a;border-radius:1px;box-sizing:border-box'></div><div class='t' style='left:116.6px;top:319.88px;font-size:5.20px;color:#e4e4e4;transform-origin:0 50%;-webkit-text-stroke:0.1px #e4e4e4;'>Name</div><svg class='r' style='left:149px;top:320px' width='6' height='4' viewBox='-0.700 -0.350 6 4'><path d='M0.5 0.6 L2.4 2.3 L4.3 0.6' stroke='#e8e8e8' stroke-width='0.85' fill='none'/></svg><div class='t' style='right:765px;top:350.92px;font-size:4.80px;color:#efefef;transform:scaleX(0.8850);transform-origin:100% 50%;-webkit-text-stroke:0.08px #efefef;'>1. Storage -&gt; Cutting</div><div class='r' style='left:142.7px;top:347.2px;width:703.10px;height:10.00px;background:#62d60f;border-radius:1px;box-shadow:0 0 0 0.9px #0e2605, inset 0 0 0 0.5px #80e444;'></div><div class='t' style='right:765px;top:365.02px;font-size:4.80px;color:#efefef;transform:scaleX(0.8850);transform-origin:100% 50%;-webkit-text-stroke:0.08px #efefef;'>2. Cutting -&gt; Press</div><div class='r' style='left:161.2px;top:361.3px;width:683.00px;height:10.00px;background:#62d60f;border-radius:1px;box-shadow:0 0 0 0.9px #0e2605, inset 0 0 0 0.5px #80e444;'></div><div class='t' style='right:765px;top:379.12px;font-size:4.80px;color:#efefef;transform:scaleX(0.8850);transform-origin:100% 50%;-webkit-text-stroke:0.08px #efefef;'>3. Press -&gt; Paint</div><div class='r' style='left:192.1px;top:375.4px;width:652.30px;height:10.00px;background:#62d60f;border-radius:1px;box-shadow:0 0 0 0.9px #0e2605, inset 0 0 0 0.5px #80e444;'></div><div class='t' style='right:765px;top:393.12px;font-size:4.80px;color:#efefef;transform:scaleX(0.8850);transform-origin:100% 50%;-webkit-text-stroke:0.08px #efefef;'>4. Paint -&gt; Packaging</div><div class='r' style='left:212.8px;top:389.4px;width:3.40px;height:10.00px;background:#62d60f;border-radius:1px;box-shadow:0 0 0 0.9px #0e2605, inset 0 0 0 0.5px #80e444;'></div><div class='r' style='left:216.9px;top:389.4px;width:626.90px;height:10.00px;background:#62d60f;border-radius:1px;box-shadow:0 0 0 0.9px #0e2605, inset 0 0 0 0.5px #80e444;'></div><div class='t' style='right:765px;top:407.12px;font-size:4.80px;color:#efefef;transform:scaleX(0.8850);transform-origin:100% 50%;-webkit-text-stroke:0.08px #efefef;'>5. Packaging -&gt; Finish</div><div class='r' style='left:238px;top:403.4px;width:21.20px;height:10.00px;background:#62d60f;border-radius:1px;box-shadow:0 0 0 0.9px #0e2605, inset 0 0 0 0.5px #80e444;'></div><div class='r' style='left:261.6px;top:403.4px;width:301.60px;height:10.00px;background:#62d60f;border-radius:1px;box-shadow:0 0 0 0.9px #0e2605, inset 0 0 0 0.5px #80e444;'></div><div class='r' style='left:565.3px;top:403.4px;width:48.00px;height:10.00px;background:#62d60f;border-radius:1px;box-shadow:0 0 0 0.9px #0e2605, inset 0 0 0 0.5px #80e444;'></div><div class='r' style='left:618.1px;top:403.4px;width:226.90px;height:10.00px;background:#62d60f;border-radius:1px;box-shadow:0 0 0 0.9px #0e2605, inset 0 0 0 0.5px #80e444;'></div><div class='t' style='right:765px;top:421.22px;font-size:4.80px;color:#efefef;transform:scaleX(0.8850);transform-origin:100% 50%;-webkit-text-stroke:0.08px #efefef;'>Charge</div><div class='r' style='left:140px;top:417.5px;width:707.50px;height:10.00px;background:#62d60f;border-radius:1px;box-shadow:0 0 0 0.9px #0e2605, inset 0 0 0 0.5px #80e444;'></div><div class='t' style='right:765px;top:435.12px;font-size:4.80px;color:#efefef;transform:scaleX(0.8850);transform-origin:100% 50%;-webkit-text-stroke:0.08px #efefef;'>Charge Forklift AGVs</div><div class='r' style='left:253.5px;top:403.79999999999995px;width:5.10px;height:9.20px;background:#8cc3d8;'></div><div class='r' style='left:270.2px;top:403.79999999999995px;width:1.20px;height:9.20px;background:#8cc3d8;'></div><div class='r' style='left:336px;top:403.79999999999995px;width:1.30px;height:9.20px;background:#8cc3d8;'></div><div class='r' style='left:354.8px;top:403.79999999999995px;width:1.20px;height:9.20px;background:#8cc3d8;'></div><div class='r' style='left:392.4px;top:403.79999999999995px;width:1.20px;height:9.20px;background:#8cc3d8;'></div><div class='r' style='left:428px;top:403.79999999999995px;width:3.50px;height:9.20px;background:#8cc3d8;'></div><div class='r' style='left:490.7px;top:403.79999999999995px;width:2.60px;height:9.20px;background:#8cc3d8;'></div><div class='r' style='left:558.5px;top:403.79999999999995px;width:4.10px;height:9.20px;background:#8cc3d8;'></div><div class='r' style='left:608.3px;top:403.79999999999995px;width:4.30px;height:9.20px;background:#8cc3d8;'></div><div class='r' style='left:770.3px;top:403.79999999999995px;width:1.50px;height:9.20px;background:#8cc3d8;'></div><div class='r' style='left:799.5px;top:403.79999999999995px;width:1.50px;height:9.20px;background:#8cc3d8;'></div><div class='r' style='left:216.8px;top:389.79999999999995px;width:2.80px;height:9.20px;background:#8cc3d8;'></div><div class='r' style='left:236.2px;top:389.79999999999995px;width:2.60px;height:9.20px;background:#8cc3d8;'></div><div class='r' style='left:246.3px;top:389.79999999999995px;width:1.60px;height:9.20px;background:#8cc3d8;'></div><div class='r' style='left:780px;top:389.79999999999995px;width:1.50px;height:9.20px;background:#8cc3d8;'></div><div class='r' style='left:318.7px;top:375.79999999999995px;width:1.30px;height:9.20px;background:#8cc3d8;'></div><div class='r' style='left:843px;top:361.7px;width:1.20px;height:9.20px;background:#8cc3d8;'></div><div class='r' style='left:646.2px;top:347.59999999999997px;width:1.30px;height:9.20px;background:#8cc3d8;'></div><div class='r' style='left:196.4px;top:347.59999999999997px;width:0.80px;height:9.20px;background:rgba(150,205,225,0.35);'></div><div class='r' style='left:231px;top:347.59999999999997px;width:0.80px;height:9.20px;background:rgba(150,205,225,0.35);'></div><div class='r' style='left:338px;top:347.59999999999997px;width:0.80px;height:9.20px;background:rgba(150,205,225,0.35);'></div><div class='r' style='left:440px;top:347.59999999999997px;width:0.80px;height:9.20px;background:rgba(150,205,225,0.35);'></div><div class='r' style='left:221.8px;top:375.79999999999995px;width:0.80px;height:9.20px;background:rgba(150,205,225,0.35);'></div><div class='r' style='left:438.7px;top:375.79999999999995px;width:0.80px;height:9.20px;background:rgba(150,205,225,0.35);'></div><div class='r' style='left:323.5px;top:389.79999999999995px;width:0.80px;height:9.20px;background:rgba(150,205,225,0.35);'></div><div class='r' style='left:330.8px;top:389.79999999999995px;width:0.80px;height:9.20px;background:rgba(150,205,225,0.35);'></div><div class='r' style='left:657px;top:389.79999999999995px;width:0.80px;height:9.20px;background:rgba(150,205,225,0.35);'></div><div class='r' style='left:759.7px;top:389.79999999999995px;width:0.80px;height:9.20px;background:rgba(150,205,225,0.35);'></div><div class='r' style='left:410.7px;top:403.79999999999995px;width:0.80px;height:9.20px;background:rgba(150,205,225,0.35);'></div><div class='r' style='left:534.7px;top:403.79999999999995px;width:0.80px;height:9.20px;background:rgba(150,205,225,0.35);'></div><div class='r' style='left:592px;top:403.79999999999995px;width:0.80px;height:9.20px;background:rgba(150,205,225,0.35);'></div><div class='r' style='left:657px;top:403.79999999999995px;width:0.80px;height:9.20px;background:rgba(150,205,225,0.35);'></div><div class='r' style='left:688.9px;top:403.79999999999995px;width:0.80px;height:9.20px;background:rgba(150,205,225,0.35);'></div><div class='r' style='left:711px;top:403.79999999999995px;width:0.80px;height:9.20px;background:rgba(150,205,225,0.35);'></div><div class='r' style='left:816.7px;top:403.79999999999995px;width:0.80px;height:9.20px;background:rgba(150,205,225,0.35);'></div><div class='r' style='left:140px;top:431.29999999999995px;width:8.00px;height:10.20px;background:#5fd412;border-radius:1px 0 0 1px;'></div><div class='r' style='left:148px;top:431.29999999999995px;width:70.90px;height:10.20px;background:#84bdd6;border-radius:0 1.5px 1.5px 0;'></div><div class='r' style='left:221.8px;top:431.4px;width:1.20px;height:10.00px;background:#62d60f;box-shadow:0 0 0 0.7px #0e2605, inset 0 0 0 0.4px #80e444;'></div><div class='r' style='left:227.4px;top:431.4px;width:1.50px;height:10.00px;background:#62d60f;box-shadow:0 0 0 0.7px #0e2605, inset 0 0 0 0.4px #80e444;'></div><div class='r' style='left:230.1px;top:431.4px;width:1.80px;height:10.00px;background:#62d60f;box-shadow:0 0 0 0.7px #0e2605, inset 0 0 0 0.4px #80e444;'></div><div class='r' style='left:232.4px;top:431.4px;width:11.90px;height:10.00px;background:#62d60f;box-shadow:0 0 0 0.7px #0e2605, inset 0 0 0 0.4px #80e444;'></div><div class='r' style='left:247.5px;top:431.4px;width:1.30px;height:10.00px;background:#62d60f;box-shadow:0 0 0 0.7px #0e2605, inset 0 0 0 0.4px #80e444;'></div><div class='r' style='left:249.7px;top:431.4px;width:2.60px;height:10.00px;background:#62d60f;box-shadow:0 0 0 0.7px #0e2605, inset 0 0 0 0.4px #80e444;'></div><div class='r' style='left:256.2px;top:431.4px;width:1.10px;height:10.00px;background:#62d60f;box-shadow:0 0 0 0.7px #0e2605, inset 0 0 0 0.4px #80e444;'></div><div class='r' style='left:259.4px;top:431.4px;width:1.80px;height:10.00px;background:#62d60f;box-shadow:0 0 0 0.7px #0e2605, inset 0 0 0 0.4px #80e444;'></div><div class='r' style='left:272.8px;top:431.4px;width:3.50px;height:10.00px;background:#62d60f;box-shadow:0 0 0 0.7px #0e2605, inset 0 0 0 0.4px #80e444;'></div><div class='r' style='left:279px;top:431.4px;width:32.00px;height:10.00px;background:#62d60f;box-shadow:0 0 0 0.7px #0e2605, inset 0 0 0 0.4px #80e444;'></div><div class='r' style='left:312.8px;top:431.4px;width:1.80px;height:10.00px;background:#62d60f;box-shadow:0 0 0 0.7px #0e2605, inset 0 0 0 0.4px #80e444;'></div><div class='r' style='left:318px;top:431.4px;width:19.70px;height:10.00px;background:#62d60f;box-shadow:0 0 0 0.7px #0e2605, inset 0 0 0 0.4px #80e444;'></div><div class='r' style='left:339.4px;top:431.4px;width:8.00px;height:10.00px;background:#62d60f;box-shadow:0 0 0 0.7px #0e2605, inset 0 0 0 0.4px #80e444;'></div><div class='r' style='left:349.6px;top:431.4px;width:5.80px;height:10.00px;background:#62d60f;box-shadow:0 0 0 0.7px #0e2605, inset 0 0 0 0.4px #80e444;'></div><div class='r' style='left:357.2px;top:431.4px;width:5.40px;height:10.00px;background:#62d60f;box-shadow:0 0 0 0.7px #0e2605, inset 0 0 0 0.4px #80e444;'></div><div class='r' style='left:367.9px;top:431.4px;width:5.70px;height:10.00px;background:#62d60f;box-shadow:0 0 0 0.7px #0e2605, inset 0 0 0 0.4px #80e444;'></div><div class='r' style='left:374.4px;top:431.4px;width:8.90px;height:10.00px;background:#62d60f;box-shadow:0 0 0 0.7px #0e2605, inset 0 0 0 0.4px #80e444;'></div><div class='r' style='left:386px;top:431.4px;width:7.10px;height:10.00px;background:#62d60f;box-shadow:0 0 0 0.7px #0e2605, inset 0 0 0 0.4px #80e444;'></div><div class='r' style='left:396.7px;top:431.4px;width:1.70px;height:10.00px;background:#62d60f;box-shadow:0 0 0 0.7px #0e2605, inset 0 0 0 0.4px #80e444;'></div><div class='r' style='left:413.6px;top:431.4px;width:2.60px;height:10.00px;background:#62d60f;box-shadow:0 0 0 0.7px #0e2605, inset 0 0 0 0.4px #80e444;'></div><div class='r' style='left:435.8px;top:431.4px;width:2.60px;height:10.00px;background:#62d60f;box-shadow:0 0 0 0.7px #0e2605, inset 0 0 0 0.4px #80e444;'></div><div class='r' style='left:439.3px;top:431.4px;width:4.50px;height:10.00px;background:#62d60f;box-shadow:0 0 0 0.7px #0e2605, inset 0 0 0 0.4px #80e444;'></div><div class='r' style='left:445.6px;top:431.4px;width:2.60px;height:10.00px;background:#62d60f;box-shadow:0 0 0 0.7px #0e2605, inset 0 0 0 0.4px #80e444;'></div><div class='r' style='left:454.4px;top:431.4px;width:1.80px;height:10.00px;background:#62d60f;box-shadow:0 0 0 0.7px #0e2605, inset 0 0 0 0.4px #80e444;'></div><div class='r' style='left:473.1px;top:431.4px;width:19.60px;height:10.00px;background:#62d60f;box-shadow:0 0 0 0.7px #0e2605, inset 0 0 0 0.4px #80e444;'></div><div class='r' style='left:510.4px;top:431.4px;width:1.80px;height:10.00px;background:#62d60f;box-shadow:0 0 0 0.7px #0e2605, inset 0 0 0 0.4px #80e444;'></div><div class='r' style='left:515.8px;top:431.4px;width:2.10px;height:10.00px;background:#62d60f;box-shadow:0 0 0 0.7px #0e2605, inset 0 0 0 0.4px #80e444;'></div><div class='r' style='left:525.6px;top:431.4px;width:13.60px;height:10.00px;background:#62d60f;box-shadow:0 0 0 0.7px #0e2605, inset 0 0 0 0.4px #80e444;'></div><div class='r' style='left:541px;top:431.4px;width:16.00px;height:10.00px;background:#62d60f;box-shadow:0 0 0 0.7px #0e2605, inset 0 0 0 0.4px #80e444;'></div><div class='r' style='left:558.8px;top:431.4px;width:10.60px;height:10.00px;background:#62d60f;box-shadow:0 0 0 0.7px #0e2605, inset 0 0 0 0.4px #80e444;'></div><div class='r' style='left:571.2px;top:431.4px;width:1.80px;height:10.00px;background:#62d60f;box-shadow:0 0 0 0.7px #0e2605, inset 0 0 0 0.4px #80e444;'></div><div class='r' style='left:573.9px;top:431.4px;width:0.90px;height:10.00px;background:#62d60f;box-shadow:0 0 0 0.7px #0e2605, inset 0 0 0 0.4px #80e444;'></div><div class='r' style='left:583.3px;top:431.4px;width:18.50px;height:10.00px;background:#62d60f;box-shadow:0 0 0 0.7px #0e2605, inset 0 0 0 0.4px #80e444;'></div><div class='r' style='left:610px;top:431.4px;width:2.10px;height:10.00px;background:#62d60f;box-shadow:0 0 0 0.7px #0e2605, inset 0 0 0 0.4px #80e444;'></div><div class='r' style='left:613.9px;top:431.4px;width:1.80px;height:10.00px;background:#62d60f;box-shadow:0 0 0 0.7px #0e2605, inset 0 0 0 0.4px #80e444;'></div><div class='r' style='left:643.2px;top:431.4px;width:41.80px;height:10.00px;background:#62d60f;box-shadow:0 0 0 0.7px #0e2605, inset 0 0 0 0.4px #80e444;'></div><div class='r' style='left:685px;top:431.4px;width:2.80px;height:10.00px;background:#62d60f;box-shadow:0 0 0 0.7px #0e2605, inset 0 0 0 0.4px #80e444;'></div><div class='r' style='left:725.4px;top:431.4px;width:6.40px;height:10.00px;background:#62d60f;box-shadow:0 0 0 0.7px #0e2605, inset 0 0 0 0.4px #80e444;'></div><div class='r' style='left:736px;top:431.4px;width:4.00px;height:10.00px;background:#62d60f;box-shadow:0 0 0 0.7px #0e2605, inset 0 0 0 0.4px #80e444;'></div><div class='r' style='left:743.3px;top:431.4px;width:12.30px;height:10.00px;background:#62d60f;box-shadow:0 0 0 0.7px #0e2605, inset 0 0 0 0.4px #80e444;'></div><div class='r' style='left:756.5px;top:431.4px;width:25.70px;height:10.00px;background:#62d60f;box-shadow:0 0 0 0.7px #0e2605, inset 0 0 0 0.4px #80e444;'></div><div class='r' style='left:784px;top:431.4px;width:9.20px;height:10.00px;background:#62d60f;box-shadow:0 0 0 0.7px #0e2605, inset 0 0 0 0.4px #80e444;'></div><div class='r' style='left:795px;top:431.4px;width:7.40px;height:10.00px;background:#62d60f;box-shadow:0 0 0 0.7px #0e2605, inset 0 0 0 0.4px #80e444;'></div><div class='r' style='left:805.2px;top:431.4px;width:1.80px;height:10.00px;background:#62d60f;box-shadow:0 0 0 0.7px #0e2605, inset 0 0 0 0.4px #80e444;'></div><div class='r' style='left:809.8px;top:431.4px;width:3.60px;height:10.00px;background:#62d60f;box-shadow:0 0 0 0.7px #0e2605, inset 0 0 0 0.4px #80e444;'></div><div class='r' style='left:815.3px;top:431.4px;width:6.40px;height:10.00px;background:#62d60f;box-shadow:0 0 0 0.7px #0e2605, inset 0 0 0 0.4px #80e444;'></div><div class='r' style='left:831.8px;top:431.4px;width:14.70px;height:10.00px;background:#62d60f;box-shadow:0 0 0 0.7px #0e2605, inset 0 0 0 0.4px #80e444;'></div><div class='r' style='left:264.8px;top:431.29999999999995px;width:0.90px;height:10.20px;background:#3d6e22;'></div><div class='r' style='left:410px;top:431.29999999999995px;width:1.80px;height:10.20px;background:#3d6e22;'></div><div class='r' style='left:418.9px;top:431.29999999999995px;width:1.80px;height:10.20px;background:#3d6e22;'></div><div class='r' style='left:641.4px;top:431.29999999999995px;width:0.90px;height:10.20px;background:#3d6e22;'></div><div class='r' style='left:824.4px;top:431.29999999999995px;width:3.60px;height:10.20px;background:#3d6e22;'></div><div class='r' style='left:236px;top:431.29999999999995px;width:0.70px;height:10.20px;background:rgba(20,60,10,0.35);'></div><div class='r' style='left:240px;top:431.29999999999995px;width:0.70px;height:10.20px;background:rgba(20,60,10,0.35);'></div><div class='r' style='left:283px;top:431.29999999999995px;width:0.70px;height:10.20px;background:rgba(20,60,10,0.35);'></div><div class='r' style='left:290px;top:431.29999999999995px;width:0.70px;height:10.20px;background:rgba(20,60,10,0.35);'></div><div class='r' style='left:297px;top:431.29999999999995px;width:0.70px;height:10.20px;background:rgba(20,60,10,0.35);'></div><div class='r' style='left:304px;top:431.29999999999995px;width:0.70px;height:10.20px;background:rgba(20,60,10,0.35);'></div><div class='r' style='left:322px;top:431.29999999999995px;width:0.70px;height:10.20px;background:rgba(20,60,10,0.35);'></div><div class='r' style='left:326px;top:431.29999999999995px;width:0.70px;height:10.20px;background:rgba(20,60,10,0.35);'></div><div class='r' style='left:331px;top:431.29999999999995px;width:0.70px;height:10.20px;background:rgba(20,60,10,0.35);'></div><div class='r' style='left:377px;top:431.29999999999995px;width:0.70px;height:10.20px;background:rgba(20,60,10,0.35);'></div><div class='r' style='left:380px;top:431.29999999999995px;width:0.70px;height:10.20px;background:rgba(20,60,10,0.35);'></div><div class='r' style='left:531px;top:431.29999999999995px;width:0.70px;height:10.20px;background:rgba(20,60,10,0.35);'></div><div class='r' style='left:545px;top:431.29999999999995px;width:0.70px;height:10.20px;background:rgba(20,60,10,0.35);'></div><div class='r' style='left:549px;top:431.29999999999995px;width:0.70px;height:10.20px;background:rgba(20,60,10,0.35);'></div><div class='r' style='left:553px;top:431.29999999999995px;width:0.70px;height:10.20px;background:rgba(20,60,10,0.35);'></div><div class='r' style='left:562px;top:431.29999999999995px;width:0.70px;height:10.20px;background:rgba(20,60,10,0.35);'></div><div class='r' style='left:566px;top:431.29999999999995px;width:0.70px;height:10.20px;background:rgba(20,60,10,0.35);'></div><div class='r' style='left:648px;top:431.29999999999995px;width:0.70px;height:10.20px;background:rgba(20,60,10,0.35);'></div><div class='r' style='left:655px;top:431.29999999999995px;width:0.70px;height:10.20px;background:rgba(20,60,10,0.35);'></div><div class='r' style='left:662px;top:431.29999999999995px;width:0.70px;height:10.20px;background:rgba(20,60,10,0.35);'></div><div class='r' style='left:668px;top:431.29999999999995px;width:0.70px;height:10.20px;background:rgba(20,60,10,0.35);'></div><div class='r' style='left:676px;top:431.29999999999995px;width:0.70px;height:10.20px;background:rgba(20,60,10,0.35);'></div><div class='r' style='left:729px;top:431.29999999999995px;width:0.70px;height:10.20px;background:rgba(20,60,10,0.35);'></div><div class='r' style='left:747px;top:431.29999999999995px;width:0.70px;height:10.20px;background:rgba(20,60,10,0.35);'></div><div class='r' style='left:751px;top:431.29999999999995px;width:0.70px;height:10.20px;background:rgba(20,60,10,0.35);'></div><div class='r' style='left:763px;top:431.29999999999995px;width:0.70px;height:10.20px;background:rgba(20,60,10,0.35);'></div><div class='r' style='left:770px;top:431.29999999999995px;width:0.70px;height:10.20px;background:rgba(20,60,10,0.35);'></div><div class='r' style='left:777px;top:431.29999999999995px;width:0.70px;height:10.20px;background:rgba(20,60,10,0.35);'></div><div class='r' style='left:787px;top:431.29999999999995px;width:0.70px;height:10.20px;background:rgba(20,60,10,0.35);'></div><div class='r' style='left:798px;top:431.29999999999995px;width:0.70px;height:10.20px;background:rgba(20,60,10,0.35);'></div><div class='r' style='left:835px;top:431.29999999999995px;width:0.70px;height:10.20px;background:rgba(20,60,10,0.35);'></div><div class='r' style='left:840px;top:431.29999999999995px;width:0.70px;height:10.20px;background:rgba(20,60,10,0.35);'></div><div class='r' style='left:372px;top:431.29999999999995px;width:1.00px;height:10.20px;background:rgba(140,195,220,0.55);'></div><div class='r' style='left:532px;top:431.29999999999995px;width:2.00px;height:10.20px;background:rgba(140,195,220,0.55);'></div><div class='r' style='left:553px;top:431.29999999999995px;width:3.00px;height:10.20px;background:rgba(140,195,220,0.55);'></div><div class='r' style='left:481px;top:431.29999999999995px;width:3.00px;height:10.20px;background:rgba(140,195,220,0.55);'></div><div class='r' style='left:765px;top:431.29999999999995px;width:15.00px;height:10.20px;background:rgba(140,195,220,0.55);'></div><div class='r' style='left:320px;top:431.29999999999995px;width:10.00px;height:10.20px;background:rgba(140,195,220,0.55);'></div><div class='t' style='left:140.1px;top:447.68px;font-size:4.79px;color:#ececec;transform:translateX(-50%) scaleX(0.8850);transform-origin:50% 50%;-webkit-text-stroke:0.08px #ececec;'>01-01-2026 - 01:00:00</div><div class='t' style='left:210.85px;top:447.68px;font-size:4.79px;color:#ececec;transform:translateX(-50%) scaleX(0.8850);transform-origin:50% 50%;-webkit-text-stroke:0.08px #ececec;'>01-01-2026 - 01:18:00</div><div class='t' style='left:281.6px;top:447.68px;font-size:4.79px;color:#ececec;transform:translateX(-50%) scaleX(0.8850);transform-origin:50% 50%;-webkit-text-stroke:0.08px #ececec;'>01-01-2026 - 01:36:00</div><div class='t' style='left:352.35px;top:447.68px;font-size:4.79px;color:#ececec;transform:translateX(-50%) scaleX(0.8850);transform-origin:50% 50%;-webkit-text-stroke:0.08px #ececec;'>01-01-2026 - 01:54:00</div><div class='t' style='left:423.1px;top:447.68px;font-size:4.79px;color:#ececec;transform:translateX(-50%) scaleX(0.8850);transform-origin:50% 50%;-webkit-text-stroke:0.08px #ececec;'>01-01-2026 - 02:12:00</div><div class='t' style='left:493.85px;top:447.68px;font-size:4.79px;color:#ececec;transform:translateX(-50%) scaleX(0.8850);transform-origin:50% 50%;-webkit-text-stroke:0.08px #ececec;'>01-01-2026 - 02:30:00</div><div class='t' style='left:564.6px;top:447.68px;font-size:4.79px;color:#ececec;transform:translateX(-50%) scaleX(0.8850);transform-origin:50% 50%;-webkit-text-stroke:0.08px #ececec;'>01-01-2026 - 02:48:00</div><div class='t' style='left:635.35px;top:447.68px;font-size:4.79px;color:#ececec;transform:translateX(-50%) scaleX(0.8850);transform-origin:50% 50%;-webkit-text-stroke:0.08px #ececec;'>01-01-2026 - 03:06:00</div><div class='t' style='left:706.1px;top:447.68px;font-size:4.79px;color:#ececec;transform:translateX(-50%) scaleX(0.8850);transform-origin:50% 50%;-webkit-text-stroke:0.08px #ececec;'>01-01-2026 - 03:24:00</div><div class='t' style='left:776.85px;top:447.68px;font-size:4.79px;color:#ececec;transform:translateX(-50%) scaleX(0.8850);transform-origin:50% 50%;-webkit-text-stroke:0.08px #ececec;'>01-01-2026 - 03:42:00</div><div class='r' style='left:0px;top:460px;width:900.00px;height:1.00px;background:#5a5a5a;'></div><div class='r' style='left:432.2px;top:452.2px;width:35.6px;height:9px;background:#3a3a3a;border-radius:1.5px 1.5px 0 0'></div><svg class='r' style='left:447px;top:454px' width='6' height='5' viewBox='-0.000 -0.500 6 5'><path d='M0.8 3.2 L3 1 L5.2 3.2' stroke='#e6e6e6' stroke-width='0.9' fill='none'/></svg>
</body></html>
